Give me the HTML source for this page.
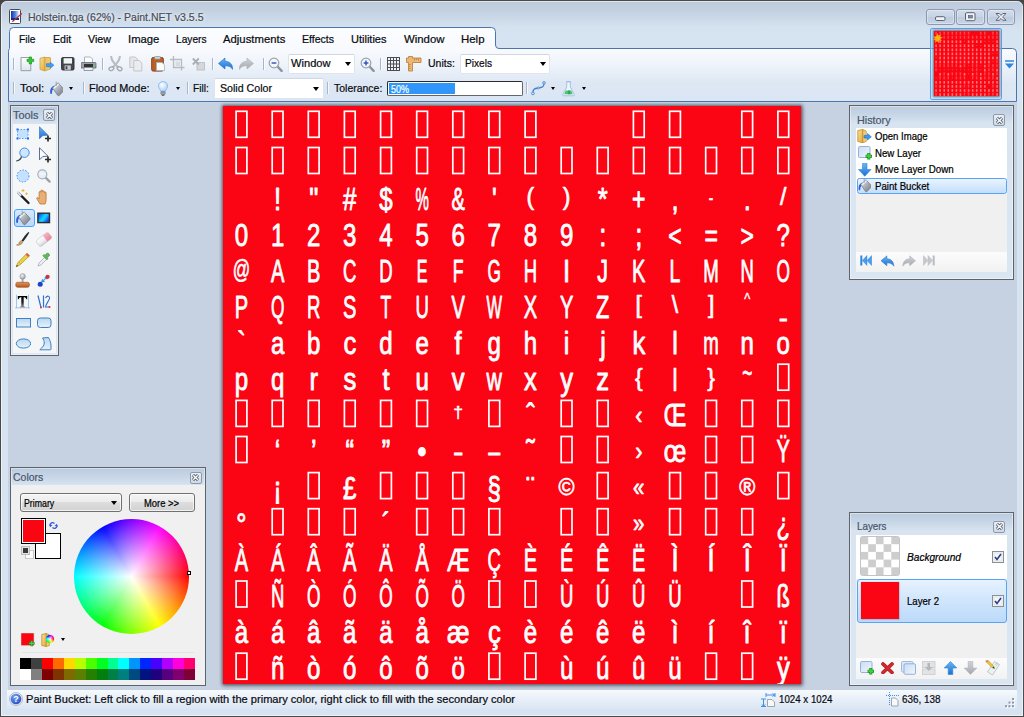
<!DOCTYPE html>
<html lang="en"><head><meta charset="utf-8"><title>Holstein.tga (62%) - Paint.NET v3.5.5</title>
<style>
html,body{margin:0;padding:0}
body{width:1024px;height:717px;overflow:hidden;position:relative;background:#454545;font-family:"Liberation Sans",sans-serif;font-size:12px}
.a,.t,svg{position:absolute}
.t{white-space:nowrap;transform-origin:0 50%;display:block;-webkit-text-stroke:.22px currentColor}
#win{left:0;top:0;width:1022px;height:715px;border:1px solid #4b4b4b;border-radius:7px 7px 1px 1px;
 background:linear-gradient(#bccbdc 0px,#c1cfdf 8px,#cad7e6 16px,#d3e0ed 25px,#d6e3f0 32px,#d7e3f1 100%)}
#win:before{content:"";position:absolute;left:0;top:0;right:0;bottom:0;border:1px solid rgba(255,255,255,.5);border-radius:6px 6px 0 0}
#work{left:7.500px;top:102px;width:1009.300px;height:588px;background:#c6d1e2}
.panel{border:1px solid #5f636a;background:#dbe6f4;box-sizing:border-box}
.cb{border:1px solid #8e9aab;border-radius:2px;box-sizing:border-box;background:linear-gradient(#e9eff7,#cfdae8)}
.sep{width:1px;background:#9fb0c8}
.combo{background:#fff;border:1px solid #dde4ee;border-top-color:#cfd7e2;box-sizing:border-box;border-radius:2px}
.arr{width:0;height:0;border-left:3.5px solid transparent;border-right:3.5px solid transparent;border-top:4px solid #000}
.wb{box-sizing:border-box;border:1px solid #8c99b4;border-radius:3px;background:linear-gradient(#d2ddeb,#c6d3e4 48%,#bdcbdd 52%,#c8d5e5);box-shadow:inset 0 0 0 1px rgba(255,255,255,.32)}
</style></head><body>
<div id="win" class="a"></div>

<svg style="left:9px;top:9px" width="13" height="15" viewBox="0 0 13 15">
<rect x=".5" y=".5" width="11" height="14" rx="1" fill="#fff" stroke="#4a4a4a"/>
<defs><linearGradient id="ig" x1="0" y1="0" x2="1" y2="0"><stop offset="0" stop-color="#1035b5"/><stop offset=".55" stop-color="#5a86e0"/><stop offset="1" stop-color="#f2f6ff"/></linearGradient></defs>
<rect x="2" y="2" width="8" height="9" fill="url(#ig)"/><rect x="2" y="9" width="8" height="2" fill="#102a7a"/>
<path d="M3.5 12.5 L13 4.5" stroke="#b0304a" stroke-width="1.3"/><path d="M2.6 13.2l1.6-.4-.9-.9z" fill="#3a6ad0"/></svg>
<span class="t" style="left:28.00px;top:10.32px;font-size:11.5px;line-height:14px;color:#464e5b;transform:scaleX(0.9162);text-shadow:0 0 6px rgba(255,255,255,.9),0 0 3px rgba(255,255,255,.8);">Holstein.tga (62%) - Paint.NET v3.5.5</span>
<div class="a wb" style="left:926px;top:9px;width:29px;height:16px"></div>
<div class="a wb" style="left:956px;top:9px;width:29px;height:16px"></div>
<div class="a wb" style="left:987px;top:9px;width:28px;height:16px"></div>
<svg style="left:926px;top:9px" width="90" height="16" viewBox="0 0 90 16">
<rect x="9.500" y="7.700" width="9.500" height="3.800" rx="1.300" fill="#eef1f5" stroke="#5a6373" stroke-width="1"/>
<rect x="39.500" y="3.700" width="9.500" height="8" rx="1.200" fill="#eef1f5" stroke="#5a6373" stroke-width="1"/><rect x="42.300" y="6.500" width="4" height="2.500" fill="#7f8ca3" stroke="#4e5868" stroke-width=".6"/>
<path d="M70 4.500h3.200l1.800 1.900 1.800-1.900H80l-3.400 3.400 3.400 3.400h-3.200L75 9.500l-1.800 1.800H70l3.400-3.400z" fill="#eef1f5" stroke="#5a6373" stroke-width="1" stroke-linejoin="round"/>
</svg>
<div id="work" class="a"></div>
<svg style="left:0;top:0" width="1024" height="106" viewBox="0 0 1024 106">
<defs><linearGradient id="mg" x1="0" y1="27" x2="0" y2="101" gradientUnits="userSpaceOnUse">
<stop offset="0" stop-color="#fcfdff"/><stop offset=".3" stop-color="#f8fafe"/><stop offset=".52" stop-color="#eef3fa"/><stop offset=".76" stop-color="#dde7f4"/><stop offset="1" stop-color="#dbe6f4"/></linearGradient></defs>
<path d="M8.5 101.5V51.5q0-2 1-3V31.5q0-4 4-4H491.5q4 0 4 4V45q0 3.500 3.500 3.500H1012.5q4 0 4 4V101.500z" fill="url(#mg)" stroke="#4d74ab" stroke-width="1"/>
<rect x="8" y="102" width="1009" height="1" fill="#cbd5e4"/>
</svg>
<span class="t" style="left:19.40px;top:32.22px;font-size:11.5px;line-height:14px;color:#080b10;transform:scaleX(0.8851);">File</span>
<span class="t" style="left:53.00px;top:32.22px;font-size:11.5px;line-height:14px;color:#080b10;transform:scaleX(0.9184);">Edit</span>
<span class="t" style="left:88.00px;top:32.22px;font-size:11.5px;line-height:14px;color:#080b10;transform:scaleX(0.9305);">View</span>
<span class="t" style="left:128.00px;top:32.22px;font-size:11.5px;line-height:14px;color:#080b10;transform:scaleX(0.9793);">Image</span>
<span class="t" style="left:176.00px;top:32.22px;font-size:11.5px;line-height:14px;color:#080b10;transform:scaleX(0.8836);">Layers</span>
<span class="t" style="left:223.00px;top:32.22px;font-size:11.5px;line-height:14px;color:#080b10;transform:scaleX(0.9845);">Adjustments</span>
<span class="t" style="left:302.00px;top:32.22px;font-size:11.5px;line-height:14px;color:#080b10;transform:scaleX(0.9157);">Effects</span>
<span class="t" style="left:351.00px;top:32.22px;font-size:11.5px;line-height:14px;color:#080b10;transform:scaleX(0.9579);">Utilities</span>
<span class="t" style="left:404.00px;top:32.22px;font-size:11.5px;line-height:14px;color:#080b10;transform:scaleX(0.9902);">Window</span>
<span class="t" style="left:461.00px;top:32.22px;font-size:11.5px;line-height:14px;color:#080b10;transform:scaleX(0.9936);">Help</span>
<div class="a sep" style="left:13px;top:58px;height:12px;background:#a7b6cd;box-shadow:1px 0 0 rgba(255,255,255,.7)"></div>
<div class="a sep" style="left:102px;top:58px;height:12px;background:#a7b6cd;box-shadow:1px 0 0 rgba(255,255,255,.7)"></div>
<div class="a sep" style="left:212px;top:58px;height:12px;background:#a7b6cd;box-shadow:1px 0 0 rgba(255,255,255,.7)"></div>
<div class="a sep" style="left:263px;top:58px;height:12px;background:#a7b6cd;box-shadow:1px 0 0 rgba(255,255,255,.7)"></div>
<div class="a sep" style="left:380px;top:58px;height:12px;background:#a7b6cd;box-shadow:1px 0 0 rgba(255,255,255,.7)"></div>
<div class="a sep" style="left:13px;top:82px;height:12px;background:#a7b6cd;box-shadow:1px 0 0 rgba(255,255,255,.7)"></div>
<div class="a sep" style="left:83px;top:82px;height:12px;background:#a7b6cd;box-shadow:1px 0 0 rgba(255,255,255,.7)"></div>
<div class="a sep" style="left:187px;top:82px;height:12px;background:#a7b6cd;box-shadow:1px 0 0 rgba(255,255,255,.7)"></div>
<div class="a sep" style="left:327px;top:82px;height:12px;background:#a7b6cd;box-shadow:1px 0 0 rgba(255,255,255,.7)"></div>
<div class="a sep" style="left:526px;top:82px;height:12px;background:#a7b6cd;box-shadow:1px 0 0 rgba(255,255,255,.7)"></div>
<span class="t" style="left:428.00px;top:56.32px;font-size:11.5px;line-height:14px;color:#080b10;transform:scaleX(0.9117);">Units:</span>
<span class="t" style="left:20.00px;top:80.92px;font-size:11.5px;line-height:14px;color:#080b10;transform:scaleX(0.9963);">Tool:</span>
<span class="t" style="left:88.80px;top:80.92px;font-size:11.5px;line-height:14px;color:#080b10;transform:scaleX(0.9465);">Flood Mode:</span>
<span class="t" style="left:192.50px;top:80.92px;font-size:11.5px;line-height:14px;color:#080b10;transform:scaleX(0.8835);">Fill:</span>
<span class="t" style="left:333.50px;top:80.92px;font-size:11.5px;line-height:14px;color:#080b10;transform:scaleX(0.9103);">Tolerance:</span>
<div class="a combo" style="left:288px;top:53.500px;width:67px;height:20.500px"></div>
<span class="t" style="left:290.50px;top:56.32px;font-size:11.5px;line-height:14px;color:#080b10;transform:scaleX(0.9658);">Window</span>
<div class="a arr" style="left:344.5px;top:62px"></div>
<div class="a combo" style="left:460px;top:53.500px;width:90px;height:20.500px"></div>
<span class="t" style="left:464.60px;top:56.32px;font-size:11.5px;line-height:14px;color:#080b10;transform:scaleX(0.8802);">Pixels</span>
<div class="a arr" style="left:539.5px;top:62px"></div>
<div class="a combo" style="left:213.500px;top:77.500px;width:110px;height:21px"></div>
<span class="t" style="left:219.70px;top:80.92px;font-size:11.5px;line-height:14px;color:#080b10;transform:scaleX(0.9245);">Solid Color</span>
<div class="a arr" style="left:313px;top:86.5px"></div>
<div class="a arr" style="left:68.9px;top:87px;border-left-width:2.700px;border-right-width:2.700px;border-top-width:3px"></div>
<div class="a arr" style="left:175.7px;top:87px;border-left-width:2.700px;border-right-width:2.700px;border-top-width:3px"></div>
<div class="a arr" style="left:551.2px;top:87px;border-left-width:2.700px;border-right-width:2.700px;border-top-width:3px"></div>
<div class="a arr" style="left:582.3px;top:87px;border-left-width:2.700px;border-right-width:2.700px;border-top-width:3px"></div>
<div class="a" style="left:387px;top:81px;width:136px;height:15px;box-sizing:border-box;border:1px solid #2b2b2b;border-right-color:#666;border-bottom-color:#666;background:#fff;border-radius:2px"><div class="a" style="left:1px;top:1px;width:66px;height:11px;background:#3096fa"></div></div>
<span class="t" style="left:391.00px;top:81.59px;font-size:11px;line-height:14px;color:#fff;transform:scaleX(0.8175);">50%</span>
<svg width="0" height="0" style="left:0;top:0"><defs>
<linearGradient id="gFold" x1="0" y1="0" x2="1" y2="1"><stop offset="0" stop-color="#fbe29a"/><stop offset="1" stop-color="#e0a83c"/></linearGradient>
<linearGradient id="gBlueA" x1="0" y1="0" x2="0" y2="1"><stop offset="0" stop-color="#6db6f5"/><stop offset="1" stop-color="#1a6fd0"/></linearGradient>
<linearGradient id="gGrayA" x1="0" y1="0" x2="0" y2="1"><stop offset="0" stop-color="#d0d3d8"/><stop offset="1" stop-color="#a4a8ae"/></linearGradient>
<linearGradient id="gPage" x1="0" y1="0" x2="0" y2="1"><stop offset="0" stop-color="#ffffff"/><stop offset="1" stop-color="#dfe5ec"/></linearGradient>
<linearGradient id="gLay" x1="0" y1="0" x2="1" y2="1"><stop offset="0" stop-color="#c9dcf4"/><stop offset="1" stop-color="#f1f6fc"/></linearGradient><linearGradient id="gSel" x1="0" y1="0" x2="0" y2="1"><stop offset="0" stop-color="#eaf4ff"/><stop offset="1" stop-color="#b5d6fb"/></linearGradient>
<linearGradient id="gShape" x1="0" y1="0" x2="0" y2="1"><stop offset="0" stop-color="#b8d7f1"/><stop offset="1" stop-color="#e6f1fa"/></linearGradient>
<linearGradient id="gBucket" x1="0" y1="0" x2="1" y2="1"><stop offset="0" stop-color="#eef0f3"/><stop offset=".5" stop-color="#a9aeb6"/><stop offset="1" stop-color="#6f747c"/></linearGradient>
<radialGradient id="gBulb" cx=".4" cy=".35" r=".7"><stop offset="0" stop-color="#ffffff"/><stop offset="1" stop-color="#a8d0fb"/></radialGradient>
<radialGradient id="gHelp" cx=".4" cy=".3" r=".8"><stop offset="0" stop-color="#7aa4f0"/><stop offset="1" stop-color="#1f49c4"/></radialGradient>
<pattern id="chk" x=".5" y=".5" width="15.400" height="15.400" patternUnits="userSpaceOnUse"><rect width="15.400" height="15.400" fill="#fff"/><rect width="7.700" height="7.700" fill="#cdcdcd"/><rect x="7.700" y="7.700" width="7.700" height="7.700" fill="#cdcdcd"/></pattern>
</defs></svg>
<svg style="left:19.5px;top:55.5px" width="15" height="16" viewBox="0 0 15 16"><path d="M1 1.500h9.800v13.200h-9.800z" fill="url(#gPage)" stroke="#8d979f" stroke-width=".9"/><path d="M7 3.300h2.200V1h2.300v2.300h2.200v2.300h-2.200v2.300H9.200V5.600H7z" fill="#35c935" stroke="#17961c" stroke-width=".7" stroke-linejoin="round"/></svg>
<svg style="left:38.5px;top:56px" width="16" height="16" viewBox="0 0 16 16"><path d="M1 2.300l5-1.300v14l-5-1.600z" fill="url(#gFold)" stroke="#cf9f43" stroke-width=".8" stroke-linejoin="round"/><path d="M6 1.500h5q.5 0 .5.500v11l-5.500 1.800z" fill="#efc66c" stroke="#cf9f43" stroke-width=".8" stroke-linejoin="round"/><path d="M7.500 7.700h3.800V6.200l3.600 3-3.600 3v-1.500H7.500z" fill="#3f9ff2" stroke="#2279cf" stroke-width=".6" stroke-linejoin="round"/></svg>
<svg style="left:61px;top:55.5px" width="14" height="16" viewBox="0 0 14 16"><rect x=".6" y="1.600" width="12.400" height="12.400" rx="1.200" fill="#45484d" stroke="#26282b" stroke-width=".9"/><rect x="2.600" y="2.200" width="8.400" height="5.400" fill="#eef5f3"/><rect x="3.600" y="9.400" width="6.200" height="4.400" fill="#c9cdd2"/><rect x="4.600" y="10.300" width="1.800" height="2.800" fill="#3f4247"/></svg>
<svg style="left:81px;top:56px" width="16" height="16" viewBox="0 0 16 16"><path d="M3.500 1h6l2 2v5h-8z" fill="#fff" stroke="#9aa3ad" stroke-width=".8"/><path d="M1 6.500h13q1 0 1 1v4.500h-15v-4.500q0-1 1-1z" fill="#9da2a9" stroke="#62676e" stroke-width=".8"/><rect x="3" y="8" width="9" height="3.200" fill="#2f3236"/><path d="M3 11.500h9v3h-9z" fill="#eef1f4" stroke="#7f868e" stroke-width=".8"/><rect x="12.300" y="8" width="1.200" height="1.200" fill="#46d246"/></svg>
<svg style="left:108px;top:56px" width="15" height="16" viewBox="0 0 15 16"><path d="M3.200 .8c.4 3 2.500 6.500 6.800 10.200M11.800 .8c-.4 3-2.500 6.500-6.800 10.200" stroke="#b9bcc0" stroke-width="2.100" fill="none" stroke-linecap="round"/><ellipse cx="3.400" cy="12.700" rx="2.500" ry="1.800" transform="rotate(-25 3.400 12.700)" fill="none" stroke="#a4a8ad" stroke-width="1.300"/><ellipse cx="11.600" cy="12.700" rx="2.500" ry="1.800" transform="rotate(25 11.600 12.700)" fill="none" stroke="#a4a8ad" stroke-width="1.300"/></svg>
<svg style="left:129px;top:56px" width="14" height="16" viewBox="0 0 14 16"><path d="M.8 1h5.500l2 2v8.500h-7.500z" fill="#e6e7e9" stroke="#c3c5c8"/><path d="M4.800 4.500h5.500l2.500 2.500v8h-8z" fill="#ebecee" stroke="#c3c5c8"/></svg>
<svg style="left:151px;top:56px" width="14" height="16" viewBox="0 0 14 16"><rect x=".7" y="1.500" width="11.600" height="13.600" rx="1.500" fill="#b9602a" stroke="#8a4218"/><rect x="3.500" y=".4" width="6" height="2.800" rx="1" fill="#cfd2d6" stroke="#7f858c" stroke-width=".7"/><path d="M5.500 6.500h5.500l2.500 2.300v5.700h-8z" fill="#fbfcfc" stroke="#a9b0b6" stroke-width=".8"/></svg>
<svg style="left:170px;top:56px" width="15" height="16" viewBox="0 0 15 16"><path d="M3.500 0v11.500h11M0 3.500h11.500v11" stroke="#b7babf" stroke-width="1.300" fill="none"/><rect x="5.500" y="5.500" width="4.500" height="4.500" fill="#d8dadd"/></svg>
<svg style="left:192px;top:57px" width="14" height="15" viewBox="0 0 14 15"><rect x="5" y="5.500" width="7.500" height="7.500" fill="#d5d7da" stroke="#bfc2c6"/><path d="M.8 1.500l6 6M6.800 1.500l-6 6" stroke="#a9adb2" stroke-width="1.800"/></svg>
<svg style="left:218px;top:57px" width="15" height="14" viewBox="0 0 15 14"><path d="M0.500 6.500L7 1v3.300c5 .2 7.500 3 7.800 8.200-1.800-2.800-4-3.800-7.800-3.700V12z" fill="url(#gBlueA)" stroke="#2a78d0" stroke-width=".7" stroke-linejoin="round"/></svg>
<svg style="left:239px;top:57px" width="15" height="14" viewBox="0 0 15 14"><path d="M14.500 6.500L8 1v3.300c-5 .2-7.500 3-7.800 8.200 1.800-2.800 4-3.800 7.800-3.700V12z" fill="url(#gGrayA)" stroke="#b3b6bb" stroke-width=".7" stroke-linejoin="round"/></svg>
<svg style="left:267.5px;top:56.5px" width="15" height="15" viewBox="0 0 15 15"><path d="M9.300 9.300l4.300 4.600" stroke="#8f959c" stroke-width="2.400" stroke-linecap="round"/><circle cx="6" cy="6" r="4.800" fill="#f3f7fb" stroke="#9aa3ad" stroke-width="1.200"/><path d="M3.600 6h4.800" stroke="#2a50c0" stroke-width="1.400"/></svg>
<svg style="left:359.5px;top:56.5px" width="15" height="15" viewBox="0 0 15 15"><path d="M9.300 9.300l4.300 4.600" stroke="#8f959c" stroke-width="2.400" stroke-linecap="round"/><circle cx="6" cy="6" r="4.800" fill="#f3f7fb" stroke="#9aa3ad" stroke-width="1.200"/><path d="M3.600 6h4.800" stroke="#2a50c0" stroke-width="1.400"/><path d="M6 3.600v4.800" stroke="#2a50c0" stroke-width="1.400"/></svg>
<svg style="left:386.5px;top:57px" width="13" height="14" viewBox="0 0 13 14"><rect x=".5" y=".5" width="12" height="13" fill="#f2f3f5" stroke="#4c4f54"/><path d="M3.500 0v14M6.500 0v14M9.500 0v14M0 3.500h13M0 7h13M0 10.500h13" stroke="#4c4f54" stroke-width="1"/></svg>
<svg style="left:406px;top:55.5px" width="16" height="16" viewBox="0 0 16 16"><path d="M.5 2h2v-1.500h4v1.500h8.500v4.500h-8.500v8.500h-4v-8.500h-2z" fill="#ecb674" stroke="#c08440" stroke-width=".9" stroke-linejoin="round"/><path d="M8.500 2.500v2M10.500 2.500v1.500M12.500 2.500v2M3 8.500h1.500M3 10.500h1.200M3 12.500h1.500" stroke="#a66c2c" stroke-width=".6"/></svg>
<svg style="left:48.5px;top:81px" width="14" height="16" viewBox="0 0 14 16"><path d="M5 4.800C2 6 .6 9 1.400 12.800c.8.700 1.700.200 1.600-1C2.900 9.500 3.800 8 6 6.800z" fill="#2a62de"/><path d="M3.600 6.900L9.200 1.900 15 8.300q.4.800-.3 1.400L10.300 14.400q-.9.600-1.700-.1z" fill="url(#gBucket)" stroke="#6a6f78" stroke-width=".7" stroke-linejoin="round"/><path d="M3.900 6.900L9.200 2.200l1.300 1.500L5.200 8.500z" fill="#eef0f4" stroke="#9a9fa8" stroke-width=".4"/><path d="M7.200 5V.6" stroke="#8a8f98" stroke-width=".8"/></svg>
<svg style="left:158px;top:81px" width="10" height="15" viewBox="0 0 10 15"><path d="M5 .6c3 0 4.600 2.100 4.600 4.300 0 2.300-1.800 3.100-2.200 5.400H2.700C2.300 8 .5 7.200.5 4.900.5 2.700 2.100.6 5 .6z" fill="url(#gBulb)" stroke="#7fb2ee" stroke-width=".8"/><rect x="2.900" y="10.600" width="4.300" height="3" rx=".8" fill="#9a9ea5" stroke="#6c7077" stroke-width=".6"/><path d="M3.800 14.300h2.500" stroke="#4e5157" stroke-width="1"/></svg>
<svg style="left:531px;top:81px" width="15" height="15" viewBox="0 0 15 15"><path d="M1.900 12.400C1.600 8 3.500 7.600 7.400 7C11.300 6.400 13.300 6 13 1.900" fill="none" stroke="#3f7fd0" stroke-width="1.300"/><circle cx="1.900" cy="12.400" r="1.400" fill="#cfe0f5" stroke="#3f7fd0" stroke-width=".8"/><circle cx="7.400" cy="7" r="1.100" fill="#cfe0f5" stroke="#3f7fd0" stroke-width=".7"/><circle cx="13" cy="1.900" r="1.300" fill="#cfe0f5" stroke="#3f7fd0" stroke-width=".8"/></svg>
<svg style="left:562px;top:80.5px" width="13" height="16" viewBox="0 0 13 16"><path d="M4.700 .7h3.600v5.300l4 7.600q.4 1.200-.9 1.200H1.600q-1.300 0-.9-1.200l4-7.600z" fill="#edf4fb" stroke="#9dbde2" stroke-width=".9" stroke-linejoin="round"/><path d="M3.700 9.600h5.600l1.500 3.700H2.200z" fill="#4cc474"/><path d="M6.200 9.600h1.800l.5 3.700H5.800z" fill="#2fa85a"/><path d="M4.300 .7h4.400" stroke="#9dbde2" stroke-width="1"/></svg>
<div class="a" style="left:930px;top:28px;width:72px;height:72px;box-sizing:border-box;border:1px solid #58a6f5;border-radius:2px;background:rgba(190,220,252,.55)"></div>
<div class="a" style="left:934px;top:31px;width:65px;height:65px;background:#fa0512;box-shadow:0 0 2px 1px rgba(60,60,60,.7)"></div>
<svg style="left:1005px;top:60px" width="9" height="9" viewBox="0 0 9 9"><rect x="0" y="0" width="9" height="2" fill="#5aa2ea"/><path d="M0 3.500h9l-4.500 5z" fill="#2d86e0"/></svg>
<div class="a panel" style="left:10px;top:105px;width:49px;height:251px;background:linear-gradient(#bacbde 0px,#cbd9e9 11px,#d8e5f1 18px,#dbe6f3 100%);box-shadow:inset 0 0 0 1px rgba(255,255,255,.42)"></div><span class="t" style="left:13.30px;top:108.02px;font-size:11.5px;line-height:14px;color:#48566b;transform:scaleX(0.9499);">Tools</span><div class="a cb" style="left:43px;top:109px;width:12px;height:12px"></div><svg style="left:45.5px;top:111.5px" width="7" height="7" viewBox="0 0 7 7"><path d="M1 1l5 5M6 1l-5 5" stroke="#3d4656" stroke-width="2.900"/><path d="M1.200 1.200l4.600 4.600M5.800 1.200l-4.600 4.600" stroke="#ffffff" stroke-width="1.500"/></svg>
<div class="a" style="left:13px;top:124px;width:43px;height:229px;background:#f5f6f8"></div>
<div class="a" style="left:14px;top:208.500px;width:20.500px;height:18px;box-sizing:border-box;border:1.300px solid #48a2ff;border-radius:3px;background:linear-gradient(#d6e8fc,#bcd9fa)"></div>
<svg style="left:15px;top:125.5px" width="16" height="16" viewBox="0 0 16 16"><rect x="2.500" y="3.500" width="10.500" height="9" fill="#c4e2ff" stroke="#5a9cf0" stroke-width="1" stroke-dasharray="1.500 1.500"/><g fill="#1f6fee"><rect x="1.500" y="2.500" width="2" height="2"/><rect x="12" y="2.500" width="2" height="2"/><rect x="1.500" y="11.500" width="2" height="2"/><rect x="12" y="11.500" width="2" height="2"/></g></svg>
<svg style="left:36.0px;top:125.5px" width="16" height="16" viewBox="0 0 16 16"><path d="M3.500 .8v12l3.300-3.300 5.200-.3z" fill="url(#gBlueA)" stroke="#2a62b8" stroke-width=".6"/><path d="M9 12.500h6M12 9.500v6" stroke="#2b2b2b" stroke-width="1.700"/></svg>
<svg style="left:15px;top:146.5px" width="16" height="16" viewBox="0 0 16 16"><circle cx="9.500" cy="5.700" r="4.700" fill="#cfe6ff" stroke="#3c8cf0" stroke-width="1"/><path d="M6.500 9.300C6 12 4 13.500 1.200 14" fill="none" stroke="#3b3f46" stroke-width="1.200"/></svg>
<svg style="left:36.0px;top:146.5px" width="16" height="16" viewBox="0 0 16 16"><path d="M3.500 .8v12l3.300-3.300 5.200-.3z" fill="#fcfdff" stroke="#4b5e88" stroke-width=".9"/><path d="M9 12.500h6M12 9.500v6" stroke="#2b2b2b" stroke-width="1.700"/></svg>
<svg style="left:15px;top:167.5px" width="16" height="16" viewBox="0 0 16 16"><circle cx="8" cy="8" r="6" fill="#c4e2ff" stroke="#3c8cf0" stroke-width="1" stroke-dasharray="1.500 1.500"/></svg>
<svg style="left:36.0px;top:167.5px" width="16" height="16" viewBox="0 0 16 16"><path d="M9.600 9.600l4 4" stroke="#9ba1a9" stroke-width="2.300" stroke-linecap="round"/><circle cx="6.300" cy="6.300" r="4.500" fill="#e6eef7" stroke="#a9b1bb" stroke-width="1.200"/><path d="M3.500 6h5.500" stroke="#fff" stroke-width=".8" fill="none"/></svg>
<svg style="left:15px;top:188.5px" width="16" height="16" viewBox="0 0 16 16"><path d="M3.500 4l10 10" stroke="#1c1c1c" stroke-width="2.400" stroke-linecap="round"/><path d="M3 3.500l2.500 2.500" stroke="#d9dce0" stroke-width="2.400" stroke-linecap="round"/><path d="M8 0v3M6.500 1.500h3M11.500 3.500v2.400M10.300 4.700h2.400" stroke="#f0b428" stroke-width="1"/></svg>
<svg style="left:36.0px;top:188.5px" width="16" height="16" viewBox="0 0 16 16"><path d="M4 15c-1-2-3-4.300-3.300-6 .5-1 1.700-.3 2.400 1V3.300c0-1.200 1.700-1.200 1.700 0V2c0-1.300 1.800-1.300 1.800 0v.8c0-1.200 1.800-1.200 1.800 0v1c0-1.100 1.700-1.100 1.700 0V11c0 1.700-.5 2.800-1 4z" fill="#e8ae72" stroke="#b9773c" stroke-width=".8" stroke-linejoin="round"/></svg>
<svg style="left:15px;top:209.5px" width="16" height="16" viewBox="0 0 16 16"><path d="M5 4.800C2 6 .6 9 1.400 12.800c.8.700 1.700.200 1.600-1C2.900 9.500 3.800 8 6 6.800z" fill="#2a62de"/><path d="M3.600 6.900L9.200 1.900 15 8.300q.4.800-.3 1.400L10.300 14.400q-.9.600-1.700-.1z" fill="url(#gBucket)" stroke="#6a6f78" stroke-width=".7" stroke-linejoin="round"/><path d="M3.900 6.900L9.200 2.200l1.300 1.500L5.200 8.500z" fill="#eef0f4" stroke="#9a9fa8" stroke-width=".4"/><path d="M7.200 5V.6" stroke="#8a8f98" stroke-width=".8"/></svg>
<svg style="left:36.0px;top:209.5px" width="16" height="16" viewBox="0 0 16 16"><defs><linearGradient id="gGr" x1="0" y1="0" x2="1" y2=".6"><stop offset="0" stop-color="#0028ee"/><stop offset=".5" stop-color="#12c4ff"/><stop offset=".62" stop-color="#1ad4ff"/><stop offset="1" stop-color="#0a4cf0"/></linearGradient></defs><rect x="1.900" y="3.200" width="11.600" height="9.400" fill="url(#gGr)" stroke="#2a2c30" stroke-width="1.400"/></svg>
<svg style="left:15px;top:230.5px" width="16" height="16" viewBox="0 0 16 16"><path d="M13.500 1C11 3 8 7 6.500 9.500l1.500 1.300C10 8.500 13 4.500 14.300 1.600z" fill="#26282c"/><path d="M6.300 9.700c-1.500.3-2.300 1.500-2.500 2.800-.4.800-1.300 1.300-2.300 1.500 2.500.8 5.300-.3 6.300-3z" fill="#c9a46a" stroke="#8c6a36" stroke-width=".5"/></svg>
<svg style="left:36.0px;top:230.5px" width="16" height="16" viewBox="0 0 16 16"><defs><linearGradient id="gEr" x1="0" y1="0" x2="0" y2="1"><stop offset="0" stop-color="#ffffff"/><stop offset=".65" stop-color="#ececef"/><stop offset="1" stop-color="#c9cbd0"/></linearGradient><linearGradient id="gEp" x1="0" y1="0" x2="0" y2="1"><stop offset="0" stop-color="#f7b4c4"/><stop offset="1" stop-color="#e8849e"/></linearGradient></defs><g transform="rotate(-38 8 8.500)"><rect x=".3" y="4.600" width="15.400" height="7.600" rx="2.200" fill="url(#gEr)" stroke="#c2c5ca" stroke-width=".6"/><path d="M9.500 4.600h4q2.200 0 2.200 2.200v3.200q0 2.200-2.200 2.200h-4z" fill="url(#gEp)"/></g></svg>
<svg style="left:15px;top:251.5px" width="16" height="16" viewBox="0 0 16 16"><path d="M12 1.200l2.600 2.600-9.800 9.200-3.600 1.800 1.400-3.800z" fill="#ecd23e" stroke="#a8901c" stroke-width=".7" stroke-linejoin="round"/><path d="M11.200 2.800l1.800 1.800M4 10l1.600 1.600" stroke="#b89c20" stroke-width=".5"/><path d="M12 1.200l2.600 2.600-1.300 1.200-2.600-2.600z" fill="#e8525c"/><path d="M1.200 14.800l.7-1.900 1.200 1.200z" fill="#2a2a2a"/></svg>
<svg style="left:36.0px;top:251.5px" width="16" height="16" viewBox="0 0 16 16"><path d="M2 14l1-3 6-6 2 2-6 6z" fill="#eceff2" stroke="#a9afb7" stroke-width=".8"/><path d="M9 3.500l1.500-2q1.200-.8 2.300.2t.3 2.300l-2 1.500 1 1-1.200 1.200-4-4L8 2.500z" fill="#5fb95f" stroke="#3d8a3d" stroke-width=".6"/></svg>
<svg style="left:15px;top:272.5px" width="16" height="16" viewBox="0 0 16 16"><defs><radialGradient id="gKn" cx=".4" cy=".35" r=".7"><stop offset="0" stop-color="#f4f5f6"/><stop offset="1" stop-color="#8e9299"/></radialGradient><linearGradient id="gBs" x1="0" y1="0" x2="0" y2="1"><stop offset="0" stop-color="#e0935a"/><stop offset="1" stop-color="#b4561e"/></linearGradient></defs><path d="M6.800 5h1.600l.3 5h-2.200z" fill="#a9adb3"/><circle cx="7.600" cy="3.400" r="2.800" fill="url(#gKn)" stroke="#8a8e95" stroke-width=".4"/><rect x=".8" y="9.300" width="13.600" height="5" rx="1.800" fill="url(#gBs)" stroke="#9a4a1c" stroke-width=".6"/></svg>
<svg style="left:36.0px;top:272.5px" width="16" height="16" viewBox="0 0 16 16"><path d="M5.300 9.200l1-3 1 1 2.200-2.200-.8-.8 3-.9-1 3-.8-.8-2.200 2.200 1 1z" fill="#2aa0f0" stroke="#1f7fd8" stroke-width=".4"/><circle cx="11.600" cy="3.800" r="2.100" fill="#d82c36"/><circle cx="4.200" cy="11.200" r="2.500" fill="#1c44c8"/></svg>
<svg style="left:15px;top:293.5px" width="16" height="16" viewBox="0 0 16 16"><defs><linearGradient id="gT" x1="0" y1="0" x2="0" y2="1"><stop offset="0" stop-color="#000"/><stop offset=".55" stop-color="#222"/><stop offset="1" stop-color="#9a9a9a"/></linearGradient></defs><path d="M1.500 .8v13.500M13.500 .8v13.500M0 13.800h15" stroke="#8fb8ee" stroke-width=".8" fill="none"/><path d="M2.800 2h9.400v3.200h-.9q-.3-1.900-2-1.900h-.6v8.400q0 1 1.500 1v.8h-5.400v-.8q1.500 0 1.500-1V3.300h-.6q-1.700 0-2 1.900h-.9z" fill="url(#gT)"/></svg>
<svg style="left:36.0px;top:293.5px" width="16" height="16" viewBox="0 0 16 16"><path d="M2 1.500l3 12M7.500 1.500v12" stroke="#2f6fd8" stroke-width="1.200"/><path d="M9.500 4c1.800-3 4.500-2 4 .5-.3 2-3.500 5-4 8.500h4.500" fill="none" stroke="#2f6fd8" stroke-width="1.100"/><circle cx="5" cy="13.500" r="1" fill="#e8303a"/><circle cx="13.500" cy="13" r="1" fill="#e8303a"/></svg>
<svg style="left:15px;top:314.5px" width="16" height="16" viewBox="0 0 16 16"><rect x="1.500" y="3.500" width="14" height="8.500" fill="url(#gShape)" stroke="#3f7fc4" stroke-width="1"/></svg>
<svg style="left:36.0px;top:314.5px" width="16" height="16" viewBox="0 0 16 16"><rect x="1.500" y="3" width="13.500" height="9.500" rx="2.800" fill="url(#gShape)" stroke="#3f7fc4" stroke-width="1"/></svg>
<svg style="left:15px;top:335.5px" width="16" height="16" viewBox="0 0 16 16"><ellipse cx="8.500" cy="7.500" rx="7.200" ry="4.600" fill="url(#gShape)" stroke="#3f7fc4" stroke-width="1"/></svg>
<svg style="left:36.0px;top:335.5px" width="16" height="16" viewBox="0 0 16 16"><path d="M6.500 2L12.500 1.500C14 4 15 7 15 10v3.200q0 .6-.6.600H3.800C6.500 11.500 8.300 9 8.300 7c0-2-.8-3.500-1.800-5z" fill="url(#gShape)" stroke="#3f7fc4" stroke-width="1" stroke-linejoin="round"/></svg>
<div class="a panel" style="left:10px;top:467px;width:196px;height:219px;background:linear-gradient(#bacbde 0px,#cbd9e9 11px,#d8e5f1 18px,#dbe6f3 100%);box-shadow:inset 0 0 0 1px rgba(255,255,255,.42)"></div><span class="t" style="left:13.30px;top:469.82px;font-size:11.5px;line-height:14px;color:#48566b;transform:scaleX(0.9118);">Colors</span><div class="a cb" style="left:189.5px;top:471.5px;width:12px;height:12px"></div><svg style="left:192.0px;top:474.0px" width="7" height="7" viewBox="0 0 7 7"><path d="M1 1l5 5M6 1l-5 5" stroke="#3d4656" stroke-width="2.900"/><path d="M1.200 1.200l4.600 4.600M5.800 1.200l-4.600 4.600" stroke="#ffffff" stroke-width="1.500"/></svg>
<div class="a" style="left:12px;top:485px;width:192px;height:199px;background:#f0f0f0"></div>
<div class="a" style="left:20px;top:493px;width:102px;height:19px;box-sizing:border-box;border:1px solid #707070;border-radius:3px;background:linear-gradient(#f4f4f4,#ececec 45%,#dddddd 50%,#d2d2d2);box-shadow:inset 0 0 0 1px rgba(255,255,255,.7)"></div>
<span class="t" style="left:23.80px;top:495.59px;font-size:11px;line-height:14px;color:#000;transform:scaleX(0.7971);">Primary</span>
<div class="a arr" style="left:110.500px;top:501px"></div>
<div class="a" style="left:128.500px;top:493px;width:66.300px;height:19px;box-sizing:border-box;border:1px solid #707070;border-radius:3px;background:linear-gradient(#f4f4f4,#ececec 45%,#dddddd 50%,#d2d2d2);box-shadow:inset 0 0 0 1px rgba(255,255,255,.7)"></div>
<span class="t" style="left:144.30px;top:495.59px;font-size:11px;line-height:14px;color:#000;transform:scaleX(0.8544);">More &gt;&gt;</span>
<div class="a" style="left:34.500px;top:533px;width:26px;height:26px;box-sizing:border-box;border:1px solid #000;background:#fff"></div>
<div class="a" style="left:20.500px;top:518px;width:25px;height:26px;box-sizing:border-box;border:1px solid #000;background:#fa0512;box-shadow:inset 0 0 0 1px #fff"></div>
<svg style="left:48.5px;top:521px" width="9" height="9" viewBox="0 0 9 9"><path d="M1 4.500C1 2 3.500 .8 5.500 2.500" fill="none" stroke="#2f5fe0" stroke-width="1.300"/><path d="M0 3.500l1.200 2.800L3.500 4z" fill="#2f5fe0"/><path d="M8 4.500C8 7 5.500 8.200 3.500 6.500" fill="none" stroke="#2f5fe0" stroke-width="1.300"/><path d="M9 5.500L7.800 2.700 5.500 5z" fill="#2f5fe0"/></svg>
<svg style="left:20.5px;top:545.5px" width="13" height="13" viewBox="0 0 13 13"><rect x="4.500" y="4.500" width="8" height="8" fill="#fdfdfd" stroke="#c9c9c9"/><rect x=".5" y=".5" width="8" height="8" fill="#e4e4e4" stroke="#bdbdbd"/><rect x="2" y="2" width="5" height="5" fill="#3a3a3a"/></svg>
<div class="a" style="left:74px;top:519px;width:115px;height:115px;border-radius:50%;background:radial-gradient(circle closest-side,#fff 0%,rgba(255,255,255,0) 100%),conic-gradient(from 90deg,#f00,#ff0,#0f0,#0ff,#00f,#f0f,#f00)"></div>
<div class="a" style="left:186.500px;top:571px;width:4px;height:4px;box-sizing:border-box;border:1px solid #000;background:#fff"></div>
<svg style="left:20.5px;top:633px" width="15" height="14" viewBox="0 0 15 14"><rect x="0" y="0" width="13" height="12.500" fill="#fa0512" stroke="#c8c8c8" stroke-width=".6"/><path d="M7.800 10.400h5.800M10.700 7.500v5.800" stroke="#1c8f1c" stroke-width="2.400"/><path d="M8.300 10.400h4.800M10.700 8v4.800" stroke="#48d048" stroke-width="1.200"/></svg>
<svg style="left:41px;top:633px" width="14" height="14" viewBox="0 0 14 14"><path d="M.8 1.500l4.500-1v13l-4.500-1z" fill="url(#gFold)" stroke="#c08a25" stroke-width=".8"/><path d="M5.300 .5v13l3-1v-11z" fill="#f3cd74" stroke="#c08a25" stroke-width=".7"/></svg>
<div class="a" style="left:46px;top:635px;width:8px;height:8px;border-radius:50%;background:radial-gradient(circle closest-side,#fff 0%,rgba(255,255,255,0) 90%),conic-gradient(from 90deg,#f00,#ff0,#0f0,#0ff,#00f,#f0f,#f00)"></div>
<div class="a arr" style="left:60.700px;top:638.300px;border-left-width:2.600px;border-right-width:2.600px;border-top-width:3px"></div>
<div class="a" style="left:22px;top:652px;width:172px;height:1px;background:#dfe4ea"></div>
<div class="a pal" style="left:20.0px;top:658px;width:175.0px;height:21.500px"><i style="left:0.00px;top:0;background:#000000"></i><i style="left:0.00px;top:11px;background:#ffffff"></i><i style="left:10.94px;top:0;background:#404040"></i><i style="left:10.94px;top:11px;background:#808080"></i><i style="left:21.88px;top:0;background:#ff0000"></i><i style="left:21.88px;top:11px;background:#7f0000"></i><i style="left:32.82px;top:0;background:#ff6a00"></i><i style="left:32.82px;top:11px;background:#7f3300"></i><i style="left:43.76px;top:0;background:#ffd800"></i><i style="left:43.76px;top:11px;background:#7f6a00"></i><i style="left:54.70px;top:0;background:#b6ff00"></i><i style="left:54.70px;top:11px;background:#5b7f00"></i><i style="left:65.64px;top:0;background:#4cff00"></i><i style="left:65.64px;top:11px;background:#267f00"></i><i style="left:76.58px;top:0;background:#00ff21"></i><i style="left:76.58px;top:11px;background:#007f0e"></i><i style="left:87.52px;top:0;background:#00ff90"></i><i style="left:87.52px;top:11px;background:#007f46"></i><i style="left:98.46px;top:0;background:#00ffff"></i><i style="left:98.46px;top:11px;background:#007f7f"></i><i style="left:109.40px;top:0;background:#0094ff"></i><i style="left:109.40px;top:11px;background:#004a7f"></i><i style="left:120.34px;top:0;background:#0026ff"></i><i style="left:120.34px;top:11px;background:#00137f"></i><i style="left:131.28px;top:0;background:#4800ff"></i><i style="left:131.28px;top:11px;background:#21007f"></i><i style="left:142.22px;top:0;background:#b200ff"></i><i style="left:142.22px;top:11px;background:#57007f"></i><i style="left:153.16px;top:0;background:#ff00dc"></i><i style="left:153.16px;top:11px;background:#7f006e"></i><i style="left:164.10px;top:0;background:#ff006e"></i><i style="left:164.10px;top:11px;background:#7f0037"></i></div>
<style>.pal i{position:absolute;width:11.24px;height:11px}</style>
<div class="a" style="left:222.5px;top:106.3px;width:578px;height:578px;background:#fb0414;box-shadow:0 0 3px 1px rgba(40,40,50,.6),1px 1px 4px 1px rgba(40,40,50,.35)"></div>
<svg style="left:222.5px;top:106.3px" width="578" height="578" viewBox="0 0 578 578"><g fill="none" stroke="#fff" stroke-width="1.700"><rect x="13.1" y="5.3" width="10.800" height="26"/><rect x="49.2" y="5.3" width="10.800" height="26"/><rect x="85.3" y="5.3" width="10.800" height="26"/><rect x="121.4" y="5.3" width="10.800" height="26"/><rect x="157.6" y="5.3" width="10.800" height="26"/><rect x="193.7" y="5.3" width="10.800" height="26"/><rect x="229.8" y="5.3" width="10.800" height="26"/><rect x="265.9" y="5.3" width="10.800" height="26"/><rect x="302.1" y="5.3" width="10.800" height="26"/><rect x="410.4" y="5.3" width="10.800" height="26"/><rect x="446.6" y="5.3" width="10.800" height="26"/><rect x="518.8" y="5.3" width="10.800" height="26"/><rect x="554.9" y="5.3" width="10.800" height="26"/><rect x="13.1" y="41.5" width="10.800" height="26"/><rect x="49.2" y="41.5" width="10.800" height="26"/><rect x="85.3" y="41.5" width="10.800" height="26"/><rect x="121.4" y="41.5" width="10.800" height="26"/><rect x="157.6" y="41.5" width="10.800" height="26"/><rect x="193.7" y="41.5" width="10.800" height="26"/><rect x="229.8" y="41.5" width="10.800" height="26"/><rect x="265.9" y="41.5" width="10.800" height="26"/><rect x="302.1" y="41.5" width="10.800" height="26"/><rect x="338.2" y="41.5" width="10.800" height="26"/><rect x="374.3" y="41.5" width="10.800" height="26"/><rect x="410.4" y="41.5" width="10.800" height="26"/><rect x="446.6" y="41.5" width="10.800" height="26"/><rect x="482.7" y="41.5" width="10.800" height="26"/><rect x="518.8" y="41.5" width="10.800" height="26"/><rect x="554.9" y="41.5" width="10.800" height="26"/><rect x="554.9" y="258.2" width="10.800" height="26"/><rect x="13.1" y="294.4" width="10.800" height="26"/><rect x="49.2" y="294.4" width="10.800" height="26"/><rect x="85.3" y="294.4" width="10.800" height="26"/><rect x="121.4" y="294.4" width="10.800" height="26"/><rect x="157.6" y="294.4" width="10.800" height="26"/><rect x="193.7" y="294.4" width="10.800" height="26"/><rect x="265.9" y="294.4" width="10.800" height="26"/><rect x="338.2" y="294.4" width="10.800" height="26"/><rect x="374.3" y="294.4" width="10.800" height="26"/><rect x="482.7" y="294.4" width="10.800" height="26"/><rect x="518.8" y="294.4" width="10.800" height="26"/><rect x="554.9" y="294.4" width="10.800" height="26"/><rect x="13.1" y="330.5" width="10.800" height="26"/><rect x="338.2" y="330.5" width="10.800" height="26"/><rect x="374.3" y="330.5" width="10.800" height="26"/><rect x="482.7" y="330.5" width="10.800" height="26"/><rect x="518.8" y="330.5" width="10.800" height="26"/><rect x="85.3" y="366.6" width="10.800" height="26"/><rect x="157.6" y="366.6" width="10.800" height="26"/><rect x="193.7" y="366.6" width="10.800" height="26"/><rect x="229.8" y="366.6" width="10.800" height="26"/><rect x="374.3" y="366.6" width="10.800" height="26"/><rect x="446.6" y="366.6" width="10.800" height="26"/><rect x="482.7" y="366.6" width="10.800" height="26"/><rect x="554.9" y="366.6" width="10.800" height="26"/><rect x="49.2" y="402.7" width="10.800" height="26"/><rect x="85.3" y="402.7" width="10.800" height="26"/><rect x="121.4" y="402.7" width="10.800" height="26"/><rect x="193.7" y="402.7" width="10.800" height="26"/><rect x="229.8" y="402.7" width="10.800" height="26"/><rect x="265.9" y="402.7" width="10.800" height="26"/><rect x="338.2" y="402.7" width="10.800" height="26"/><rect x="374.3" y="402.7" width="10.800" height="26"/><rect x="446.6" y="402.7" width="10.800" height="26"/><rect x="482.7" y="402.7" width="10.800" height="26"/><rect x="518.8" y="402.7" width="10.800" height="26"/><rect x="13.1" y="475.0" width="10.800" height="26"/><rect x="265.9" y="475.0" width="10.800" height="26"/><rect x="302.1" y="475.0" width="10.800" height="26"/><rect x="518.8" y="475.0" width="10.800" height="26"/><rect x="13.1" y="547.2" width="10.800" height="26"/><rect x="265.9" y="547.2" width="10.800" height="26"/><rect x="302.1" y="547.2" width="10.800" height="26"/><rect x="482.7" y="547.2" width="10.800" height="26"/><rect x="518.8" y="547.2" width="10.800" height="26"/></g><g fill="#fff" stroke="#fff" stroke-width=".9" stroke-linejoin="round" font-family="Liberation Sans, sans-serif" font-size="32"><text transform="translate(51.0,103.5) scale(0.800,1.00)">!</text><text transform="translate(86.2,103.5) scale(0.800,1.00)">&quot;</text><text transform="translate(120.1,103.5) scale(0.752,1.00)">#</text><text transform="translate(156.3,103.5) scale(0.752,1.00)">$</text><text transform="translate(192.4,103.5) scale(0.471,1.00)">%</text><text transform="translate(228.5,103.5) scale(0.627,1.00)">&amp;</text><text transform="translate(268.9,103.5) scale(0.780,1.00)">&#x27;</text><text transform="translate(303.6,99.0) scale(0.720,0.74)">(</text><text transform="translate(339.7,99.0) scale(0.720,0.74)">)</text><text transform="translate(374.7,103.5) scale(0.800,1.00)">*</text><text transform="translate(409.1,103.5) scale(0.717,1.00)">+</text><text transform="translate(448.4,103.5) scale(0.800,1.00)">,</text><text transform="translate(485.8,98.5) scale(0.421,0.70)">-</text><text transform="translate(520.7,103.5) scale(0.800,1.00)">.</text><text transform="translate(557.1,99.0) scale(0.720,0.74)">/</text><text transform="translate(11.8,139.7) scale(0.752,1.00)">0</text><text transform="translate(47.9,139.7) scale(0.752,1.00)">1</text><text transform="translate(84.0,139.7) scale(0.752,1.00)">2</text><text transform="translate(120.1,139.7) scale(0.752,1.00)">3</text><text transform="translate(156.3,139.7) scale(0.752,1.00)">4</text><text transform="translate(192.4,139.7) scale(0.752,1.00)">5</text><text transform="translate(228.5,139.7) scale(0.752,1.00)">6</text><text transform="translate(264.6,139.7) scale(0.752,1.00)">7</text><text transform="translate(300.8,139.7) scale(0.752,1.00)">8</text><text transform="translate(336.9,139.7) scale(0.752,1.00)">9</text><text transform="translate(376.2,139.7) scale(0.800,1.00)">:</text><text transform="translate(412.3,139.7) scale(0.800,1.00)">;</text><text transform="translate(445.3,139.7) scale(0.717,0.90)">&lt;</text><text transform="translate(481.4,139.7) scale(0.717,0.90)">=</text><text transform="translate(517.5,139.7) scale(0.717,0.90)">&gt;</text><text transform="translate(553.6,139.7) scale(0.752,1.00)">?</text><text transform="translate(9.7,172.3) scale(0.538,0.80)">@</text><text transform="translate(47.9,175.8) scale(0.627,1.00)">A</text><text transform="translate(84.0,175.8) scale(0.627,1.00)">B</text><text transform="translate(120.1,175.8) scale(0.579,1.00)">C</text><text transform="translate(156.3,175.8) scale(0.579,1.00)">D</text><text transform="translate(193.7,175.8) scale(0.505,1.00)">E</text><text transform="translate(229.8,175.8) scale(0.552,1.00)">F</text><text transform="translate(264.6,175.8) scale(0.539,1.00)">G</text><text transform="translate(300.8,175.8) scale(0.579,1.00)">H</text><text transform="translate(340.0,175.8) scale(0.800,1.00)">I</text><text transform="translate(374.3,175.8) scale(0.675,1.00)">J</text><text transform="translate(409.1,175.8) scale(0.627,1.00)">K</text><text transform="translate(446.6,175.8) scale(0.606,1.00)">L</text><text transform="translate(480.3,175.8) scale(0.581,1.00)">M</text><text transform="translate(517.5,175.8) scale(0.579,1.00)">N</text><text transform="translate(553.6,175.8) scale(0.539,1.00)">O</text><text transform="translate(11.8,211.9) scale(0.627,1.00)">P</text><text transform="translate(47.9,211.9) scale(0.539,1.00)">Q</text><text transform="translate(84.0,211.9) scale(0.579,1.00)">R</text><text transform="translate(120.1,211.9) scale(0.627,1.00)">S</text><text transform="translate(157.6,211.9) scale(0.552,1.00)">T</text><text transform="translate(192.4,211.9) scale(0.579,1.00)">U</text><text transform="translate(228.5,211.9) scale(0.627,1.00)">V</text><text transform="translate(263.6,211.9) scale(0.513,1.00)">W</text><text transform="translate(300.8,211.9) scale(0.627,1.00)">X</text><text transform="translate(336.9,211.9) scale(0.627,1.00)">Y</text><text transform="translate(373.0,211.9) scale(0.685,1.00)">Z</text><text transform="translate(412.6,207.3) scale(0.720,0.74)">[</text><text transform="translate(448.7,207.3) scale(0.720,0.74)">\</text><text transform="translate(484.9,207.3) scale(0.720,0.74)">]</text><text transform="translate(521.2,199.4) scale(0.400,0.50)">^</text><text transform="translate(557.0,209.4) scale(0.375,1.00)">_</text><text transform="translate(14.2,248.1) scale(0.800,1.00)">`</text><text transform="translate(47.9,248.1) scale(0.752,1.00)">a</text><text transform="translate(84.0,248.1) scale(0.752,1.00)">b</text><text transform="translate(120.4,248.1) scale(0.800,1.00)">c</text><text transform="translate(156.3,248.1) scale(0.752,1.00)">d</text><text transform="translate(192.4,248.1) scale(0.752,1.00)">e</text><text transform="translate(231.6,248.1) scale(0.800,1.00)">f</text><text transform="translate(264.6,248.1) scale(0.752,1.00)">g</text><text transform="translate(300.8,248.1) scale(0.752,1.00)">h</text><text transform="translate(340.8,248.1) scale(0.780,1.00)">i</text><text transform="translate(377.3,248.1) scale(0.780,1.00)">j</text><text transform="translate(409.4,248.1) scale(0.800,1.00)">k</text><text transform="translate(449.2,248.1) scale(0.780,1.00)">l</text><text transform="translate(480.3,248.1) scale(0.581,1.00)">m</text><text transform="translate(517.5,248.1) scale(0.752,1.00)">n</text><text transform="translate(553.6,248.1) scale(0.752,1.00)">o</text><text transform="translate(11.8,284.2) scale(0.752,1.00)">p</text><text transform="translate(47.9,284.2) scale(0.752,1.00)">q</text><text transform="translate(86.4,284.2) scale(0.800,1.00)">r</text><text transform="translate(120.4,284.2) scale(0.800,1.00)">s</text><text transform="translate(159.4,284.2) scale(0.800,1.00)">t</text><text transform="translate(192.4,284.2) scale(0.752,1.00)">u</text><text transform="translate(228.8,284.2) scale(0.800,1.00)">v</text><text transform="translate(263.6,284.2) scale(0.667,1.00)">w</text><text transform="translate(301.1,284.2) scale(0.800,1.00)">x</text><text transform="translate(337.2,284.2) scale(0.800,1.00)">y</text><text transform="translate(373.3,284.2) scale(0.800,1.00)">z</text><text transform="translate(412.0,279.6) scale(0.720,0.74)">{</text><text transform="translate(449.0,279.6) scale(0.720,0.74)">|</text><text transform="translate(484.2,279.6) scale(0.720,0.74)">}</text><text transform="translate(519.2,277.2) scale(0.538,0.90)">~</text><text transform="translate(230.3,311.8) scale(0.550,0.52)">†</text><text transform="translate(303.2,320.3) scale(0.800,1.00)">ˆ</text><text transform="translate(412.2,317.8) scale(0.680,0.80)">‹</text><text transform="translate(440.7,320.3) scale(0.703,1.00)">Œ</text><text transform="translate(51.8,356.4) scale(0.780,1.00)">‘</text><text transform="translate(87.9,356.4) scale(0.780,1.00)">’</text><text transform="translate(122.6,356.4) scale(0.800,1.00)">“</text><text transform="translate(158.7,356.4) scale(0.800,1.00)">”</text><text transform="translate(194.6,356.4) scale(0.800,1.00)">•</text><text transform="translate(231.2,356.4) scale(0.449,1.00)">–</text><text transform="translate(265.3,356.4) scale(0.375,1.00)">—</text><text transform="translate(303.3,356.4) scale(0.800,1.00)">˜</text><text transform="translate(412.2,353.9) scale(0.680,0.80)">›</text><text transform="translate(440.7,356.4) scale(0.745,1.00)">œ</text><text transform="translate(553.6,356.4) scale(0.627,1.00)">Ÿ</text><text transform="translate(50.3,392.6) scale(0.800,1.00)">¡</text><text transform="translate(120.1,392.6) scale(0.752,1.00)">£</text><text transform="translate(264.6,392.6) scale(0.752,1.00)">§</text><text transform="translate(303.2,392.6) scale(0.800,1.00)">¨</text><text transform="translate(335.6,388.6) scale(0.679,0.72)">©</text><text transform="translate(410.1,390.1) scale(0.639,0.80)">«</text><text transform="translate(516.2,388.6) scale(0.679,0.72)">®</text><text transform="translate(13.3,428.7) scale(0.800,1.00)">°</text><text transform="translate(158.7,428.7) scale(0.800,1.00)">´</text><text transform="translate(410.1,426.2) scale(0.639,0.80)">»</text><text transform="translate(553.6,428.7) scale(0.685,1.00)">¿</text><text transform="translate(11.8,464.8) scale(0.627,1.00)">À</text><text transform="translate(47.9,464.8) scale(0.627,1.00)">Á</text><text transform="translate(84.0,464.8) scale(0.627,1.00)">Â</text><text transform="translate(120.1,464.8) scale(0.627,1.00)">Ã</text><text transform="translate(156.3,464.8) scale(0.627,1.00)">Ä</text><text transform="translate(192.4,464.8) scale(0.627,1.00)">Å</text><text transform="translate(224.0,464.8) scale(0.703,1.00)">Æ</text><text transform="translate(264.6,464.8) scale(0.579,1.00)">Ç</text><text transform="translate(300.8,464.8) scale(0.627,1.00)">È</text><text transform="translate(336.9,464.8) scale(0.627,1.00)">É</text><text transform="translate(373.0,464.8) scale(0.627,1.00)">Ê</text><text transform="translate(409.1,464.8) scale(0.627,1.00)">Ë</text><text transform="translate(448.4,464.8) scale(0.800,1.00)">Ì</text><text transform="translate(484.5,464.8) scale(0.800,1.00)">Í</text><text transform="translate(520.7,464.8) scale(0.800,1.00)">Î</text><text transform="translate(556.8,464.8) scale(0.800,1.00)">Ï</text><text transform="translate(47.9,500.9) scale(0.579,1.00)">Ñ</text><text transform="translate(84.0,500.9) scale(0.539,1.00)">Ò</text><text transform="translate(120.1,500.9) scale(0.539,1.00)">Ó</text><text transform="translate(156.3,500.9) scale(0.539,1.00)">Ô</text><text transform="translate(192.4,500.9) scale(0.539,1.00)">Õ</text><text transform="translate(228.5,500.9) scale(0.539,1.00)">Ö</text><text transform="translate(336.9,500.9) scale(0.579,1.00)">Ù</text><text transform="translate(373.0,500.9) scale(0.579,1.00)">Ú</text><text transform="translate(409.1,500.9) scale(0.579,1.00)">Û</text><text transform="translate(445.3,500.9) scale(0.579,1.00)">Ü</text><text transform="translate(553.6,500.9) scale(0.685,1.00)">ß</text><text transform="translate(11.8,537.0) scale(0.752,1.00)">à</text><text transform="translate(47.9,537.0) scale(0.752,1.00)">á</text><text transform="translate(84.0,537.0) scale(0.752,1.00)">â</text><text transform="translate(120.1,537.0) scale(0.752,1.00)">ã</text><text transform="translate(156.3,537.0) scale(0.752,1.00)">ä</text><text transform="translate(192.4,537.0) scale(0.752,1.00)">å</text><text transform="translate(224.0,537.0) scale(0.791,1.00)">æ</text><text transform="translate(264.9,537.0) scale(0.800,1.00)">ç</text><text transform="translate(300.8,537.0) scale(0.752,1.00)">è</text><text transform="translate(336.9,537.0) scale(0.752,1.00)">é</text><text transform="translate(373.0,537.0) scale(0.752,1.00)">ê</text><text transform="translate(409.1,537.0) scale(0.752,1.00)">ë</text><text transform="translate(448.4,537.0) scale(0.800,1.00)">ì</text><text transform="translate(484.5,537.0) scale(0.800,1.00)">í</text><text transform="translate(520.6,537.0) scale(0.800,1.00)">î</text><text transform="translate(556.8,537.0) scale(0.800,1.00)">ï</text><text transform="translate(47.9,573.2) scale(0.752,1.00)">ñ</text><text transform="translate(84.0,573.2) scale(0.752,1.00)">ò</text><text transform="translate(120.1,573.2) scale(0.752,1.00)">ó</text><text transform="translate(156.3,573.2) scale(0.752,1.00)">ô</text><text transform="translate(192.4,573.2) scale(0.752,1.00)">õ</text><text transform="translate(228.5,573.2) scale(0.752,1.00)">ö</text><text transform="translate(336.9,573.2) scale(0.752,1.00)">ù</text><text transform="translate(373.0,573.2) scale(0.752,1.00)">ú</text><text transform="translate(409.1,573.2) scale(0.752,1.00)">û</text><text transform="translate(445.3,573.2) scale(0.752,1.00)">ü</text><text transform="translate(553.9,573.2) scale(0.800,1.00)">ÿ</text></g></svg>
<svg style="left:934px;top:31px" width="65" height="65" viewBox="0 0 65 65"><rect x="1.30" y="0.70" width="1.500" height="3" fill="#fff" opacity=".26"/><rect x="5.36" y="0.70" width="1.500" height="3" fill="#fff" opacity=".26"/><rect x="9.43" y="0.70" width="1.500" height="3" fill="#fff" opacity=".26"/><rect x="13.49" y="0.70" width="1.500" height="3" fill="#fff" opacity=".26"/><rect x="17.55" y="0.70" width="1.500" height="3" fill="#fff" opacity=".26"/><rect x="21.61" y="0.70" width="1.500" height="3" fill="#fff" opacity=".26"/><rect x="25.68" y="0.70" width="1.500" height="3" fill="#fff" opacity=".26"/><rect x="29.74" y="0.70" width="1.500" height="3" fill="#fff" opacity=".26"/><rect x="33.80" y="0.70" width="1.500" height="3" fill="#fff" opacity=".26"/><rect x="45.99" y="0.70" width="1.500" height="3" fill="#fff" opacity=".26"/><rect x="50.05" y="0.70" width="1.500" height="3" fill="#fff" opacity=".26"/><rect x="58.17" y="0.70" width="1.500" height="3" fill="#fff" opacity=".26"/><rect x="62.24" y="0.70" width="1.500" height="3" fill="#fff" opacity=".26"/><rect x="1.30" y="4.76" width="1.500" height="3" fill="#fff" opacity=".26"/><rect x="5.36" y="4.76" width="1.500" height="3" fill="#fff" opacity=".26"/><rect x="9.43" y="4.76" width="1.500" height="3" fill="#fff" opacity=".26"/><rect x="13.49" y="4.76" width="1.500" height="3" fill="#fff" opacity=".26"/><rect x="17.55" y="4.76" width="1.500" height="3" fill="#fff" opacity=".26"/><rect x="21.61" y="4.76" width="1.500" height="3" fill="#fff" opacity=".26"/><rect x="25.68" y="4.76" width="1.500" height="3" fill="#fff" opacity=".26"/><rect x="29.74" y="4.76" width="1.500" height="3" fill="#fff" opacity=".26"/><rect x="33.80" y="4.76" width="1.500" height="3" fill="#fff" opacity=".26"/><rect x="37.86" y="4.76" width="1.500" height="3" fill="#fff" opacity=".26"/><rect x="41.92" y="4.76" width="1.500" height="3" fill="#fff" opacity=".26"/><rect x="45.99" y="4.76" width="1.500" height="3" fill="#fff" opacity=".26"/><rect x="50.05" y="4.76" width="1.500" height="3" fill="#fff" opacity=".26"/><rect x="54.11" y="4.76" width="1.500" height="3" fill="#fff" opacity=".26"/><rect x="58.17" y="4.76" width="1.500" height="3" fill="#fff" opacity=".26"/><rect x="62.24" y="4.76" width="1.500" height="3" fill="#fff" opacity=".26"/><rect x="5.36" y="9.42" width="1.600" height="2.600" fill="#fff" opacity=".45"/><rect x="9.43" y="9.42" width="1.600" height="2.600" fill="#fff" opacity=".45"/><rect x="13.49" y="9.42" width="1.600" height="2.600" fill="#fff" opacity=".45"/><rect x="17.55" y="9.42" width="1.600" height="2.600" fill="#fff" opacity=".45"/><rect x="21.61" y="9.42" width="1.600" height="2.600" fill="#fff" opacity=".45"/><rect x="25.68" y="9.42" width="1.600" height="2.600" fill="#fff" opacity=".45"/><rect x="30.04" y="9.82" width="1" height="1" fill="#fff" opacity=".3"/><rect x="33.80" y="9.42" width="1.600" height="2.600" fill="#fff" opacity=".45"/><rect x="37.86" y="9.42" width="1.600" height="2.600" fill="#fff" opacity=".45"/><rect x="41.92" y="9.42" width="1.600" height="2.600" fill="#fff" opacity=".45"/><rect x="45.99" y="9.42" width="1.600" height="2.600" fill="#fff" opacity=".45"/><rect x="50.35" y="9.82" width="1" height="1" fill="#fff" opacity=".3"/><rect x="54.41" y="9.82" width="1" height="1" fill="#fff" opacity=".3"/><rect x="58.47" y="9.82" width="1" height="1" fill="#fff" opacity=".3"/><rect x="62.24" y="9.42" width="1.600" height="2.600" fill="#fff" opacity=".45"/><rect x="1.30" y="13.49" width="1.600" height="2.600" fill="#fff" opacity=".45"/><rect x="5.36" y="13.49" width="1.600" height="2.600" fill="#fff" opacity=".45"/><rect x="9.43" y="13.49" width="1.600" height="2.600" fill="#fff" opacity=".45"/><rect x="13.49" y="13.49" width="1.600" height="2.600" fill="#fff" opacity=".45"/><rect x="17.55" y="13.49" width="1.600" height="2.600" fill="#fff" opacity=".45"/><rect x="21.61" y="13.49" width="1.600" height="2.600" fill="#fff" opacity=".45"/><rect x="25.68" y="13.49" width="1.600" height="2.600" fill="#fff" opacity=".45"/><rect x="29.74" y="13.49" width="1.600" height="2.600" fill="#fff" opacity=".45"/><rect x="33.80" y="13.49" width="1.600" height="2.600" fill="#fff" opacity=".45"/><rect x="37.86" y="13.49" width="1.600" height="2.600" fill="#fff" opacity=".45"/><rect x="42.22" y="13.89" width="1" height="1" fill="#fff" opacity=".3"/><rect x="46.29" y="13.89" width="1" height="1" fill="#fff" opacity=".3"/><rect x="50.05" y="13.49" width="1.600" height="2.600" fill="#fff" opacity=".45"/><rect x="54.11" y="13.49" width="1.600" height="2.600" fill="#fff" opacity=".45"/><rect x="58.17" y="13.49" width="1.600" height="2.600" fill="#fff" opacity=".45"/><rect x="62.24" y="13.49" width="1.600" height="2.600" fill="#fff" opacity=".45"/><rect x="1.30" y="17.55" width="1.600" height="2.600" fill="#fff" opacity=".45"/><rect x="5.36" y="17.55" width="1.600" height="2.600" fill="#fff" opacity=".45"/><rect x="9.43" y="17.55" width="1.600" height="2.600" fill="#fff" opacity=".45"/><rect x="13.49" y="17.55" width="1.600" height="2.600" fill="#fff" opacity=".45"/><rect x="17.55" y="17.55" width="1.600" height="2.600" fill="#fff" opacity=".45"/><rect x="21.61" y="17.55" width="1.600" height="2.600" fill="#fff" opacity=".45"/><rect x="25.68" y="17.55" width="1.600" height="2.600" fill="#fff" opacity=".45"/><rect x="29.74" y="17.55" width="1.600" height="2.600" fill="#fff" opacity=".45"/><rect x="33.80" y="17.55" width="1.600" height="2.600" fill="#fff" opacity=".45"/><rect x="37.86" y="17.55" width="1.600" height="2.600" fill="#fff" opacity=".45"/><rect x="41.92" y="17.55" width="1.600" height="2.600" fill="#fff" opacity=".45"/><rect x="45.99" y="17.55" width="1.600" height="2.600" fill="#fff" opacity=".45"/><rect x="50.05" y="17.55" width="1.600" height="2.600" fill="#fff" opacity=".45"/><rect x="54.11" y="17.55" width="1.600" height="2.600" fill="#fff" opacity=".45"/><rect x="58.17" y="17.55" width="1.600" height="2.600" fill="#fff" opacity=".45"/><rect x="62.24" y="17.55" width="1.600" height="2.600" fill="#fff" opacity=".45"/><rect x="1.30" y="21.61" width="1.600" height="2.600" fill="#fff" opacity=".45"/><rect x="5.36" y="21.61" width="1.600" height="2.600" fill="#fff" opacity=".45"/><rect x="9.43" y="21.61" width="1.600" height="2.600" fill="#fff" opacity=".45"/><rect x="13.49" y="21.61" width="1.600" height="2.600" fill="#fff" opacity=".45"/><rect x="17.55" y="21.61" width="1.600" height="2.600" fill="#fff" opacity=".45"/><rect x="21.61" y="21.61" width="1.600" height="2.600" fill="#fff" opacity=".45"/><rect x="25.68" y="21.61" width="1.600" height="2.600" fill="#fff" opacity=".45"/><rect x="29.74" y="21.61" width="1.600" height="2.600" fill="#fff" opacity=".45"/><rect x="33.80" y="21.61" width="1.600" height="2.600" fill="#fff" opacity=".45"/><rect x="37.86" y="21.61" width="1.600" height="2.600" fill="#fff" opacity=".45"/><rect x="41.92" y="21.61" width="1.600" height="2.600" fill="#fff" opacity=".45"/><rect x="45.99" y="21.61" width="1.600" height="2.600" fill="#fff" opacity=".45"/><rect x="50.05" y="21.61" width="1.600" height="2.600" fill="#fff" opacity=".45"/><rect x="54.11" y="21.61" width="1.600" height="2.600" fill="#fff" opacity=".45"/><rect x="58.47" y="22.01" width="1" height="1" fill="#fff" opacity=".3"/><rect x="62.54" y="22.01" width="1" height="1" fill="#fff" opacity=".3"/><rect x="1.60" y="26.07" width="1" height="1" fill="#fff" opacity=".3"/><rect x="5.36" y="25.68" width="1.600" height="2.600" fill="#fff" opacity=".45"/><rect x="9.43" y="25.68" width="1.600" height="2.600" fill="#fff" opacity=".45"/><rect x="13.49" y="25.68" width="1.600" height="2.600" fill="#fff" opacity=".45"/><rect x="17.55" y="25.68" width="1.600" height="2.600" fill="#fff" opacity=".45"/><rect x="21.61" y="25.68" width="1.600" height="2.600" fill="#fff" opacity=".45"/><rect x="25.68" y="25.68" width="1.600" height="2.600" fill="#fff" opacity=".45"/><rect x="29.74" y="25.68" width="1.600" height="2.600" fill="#fff" opacity=".45"/><rect x="33.80" y="25.68" width="1.600" height="2.600" fill="#fff" opacity=".45"/><rect x="37.86" y="25.68" width="1.600" height="2.600" fill="#fff" opacity=".45"/><rect x="41.92" y="25.68" width="1.600" height="2.600" fill="#fff" opacity=".45"/><rect x="45.99" y="25.68" width="1.600" height="2.600" fill="#fff" opacity=".45"/><rect x="50.05" y="25.68" width="1.600" height="2.600" fill="#fff" opacity=".45"/><rect x="54.11" y="25.68" width="1.600" height="2.600" fill="#fff" opacity=".45"/><rect x="58.17" y="25.68" width="1.600" height="2.600" fill="#fff" opacity=".45"/><rect x="62.24" y="25.68" width="1.600" height="2.600" fill="#fff" opacity=".45"/><rect x="1.30" y="29.74" width="1.600" height="2.600" fill="#fff" opacity=".45"/><rect x="5.36" y="29.74" width="1.600" height="2.600" fill="#fff" opacity=".45"/><rect x="9.43" y="29.74" width="1.600" height="2.600" fill="#fff" opacity=".45"/><rect x="13.49" y="29.74" width="1.600" height="2.600" fill="#fff" opacity=".45"/><rect x="17.55" y="29.74" width="1.600" height="2.600" fill="#fff" opacity=".45"/><rect x="21.61" y="29.74" width="1.600" height="2.600" fill="#fff" opacity=".45"/><rect x="25.68" y="29.74" width="1.600" height="2.600" fill="#fff" opacity=".45"/><rect x="29.74" y="29.74" width="1.600" height="2.600" fill="#fff" opacity=".45"/><rect x="33.80" y="29.74" width="1.600" height="2.600" fill="#fff" opacity=".45"/><rect x="37.86" y="29.74" width="1.600" height="2.600" fill="#fff" opacity=".45"/><rect x="41.92" y="29.74" width="1.600" height="2.600" fill="#fff" opacity=".45"/><rect x="45.99" y="29.74" width="1.600" height="2.600" fill="#fff" opacity=".45"/><rect x="50.05" y="29.74" width="1.600" height="2.600" fill="#fff" opacity=".45"/><rect x="54.11" y="29.74" width="1.600" height="2.600" fill="#fff" opacity=".45"/><rect x="58.47" y="30.14" width="1" height="1" fill="#fff" opacity=".3"/><rect x="62.24" y="29.14" width="1.500" height="3" fill="#fff" opacity=".26"/><rect x="1.30" y="33.20" width="1.500" height="3" fill="#fff" opacity=".26"/><rect x="5.36" y="33.20" width="1.500" height="3" fill="#fff" opacity=".26"/><rect x="9.43" y="33.20" width="1.500" height="3" fill="#fff" opacity=".26"/><rect x="13.49" y="33.20" width="1.500" height="3" fill="#fff" opacity=".26"/><rect x="17.55" y="33.20" width="1.500" height="3" fill="#fff" opacity=".26"/><rect x="21.61" y="33.20" width="1.500" height="3" fill="#fff" opacity=".26"/><rect x="25.68" y="33.80" width="1.600" height="2.600" fill="#fff" opacity=".45"/><rect x="29.74" y="33.20" width="1.500" height="3" fill="#fff" opacity=".26"/><rect x="34.10" y="34.20" width="1" height="1" fill="#fff" opacity=".3"/><rect x="37.86" y="33.20" width="1.500" height="3" fill="#fff" opacity=".26"/><rect x="41.92" y="33.20" width="1.500" height="3" fill="#fff" opacity=".26"/><rect x="46.29" y="34.20" width="1" height="1" fill="#fff" opacity=".3"/><rect x="50.05" y="33.80" width="1.600" height="2.600" fill="#fff" opacity=".45"/><rect x="54.11" y="33.20" width="1.500" height="3" fill="#fff" opacity=".26"/><rect x="58.17" y="33.20" width="1.500" height="3" fill="#fff" opacity=".26"/><rect x="62.24" y="33.20" width="1.500" height="3" fill="#fff" opacity=".26"/><rect x="1.30" y="37.26" width="1.500" height="3" fill="#fff" opacity=".26"/><rect x="5.66" y="38.26" width="1" height="1" fill="#fff" opacity=".3"/><rect x="9.73" y="38.26" width="1" height="1" fill="#fff" opacity=".3"/><rect x="13.79" y="38.26" width="1" height="1" fill="#fff" opacity=".3"/><rect x="17.85" y="38.26" width="1" height="1" fill="#fff" opacity=".3"/><rect x="21.91" y="38.26" width="1" height="1" fill="#fff" opacity=".3"/><rect x="25.98" y="38.26" width="1" height="1" fill="#fff" opacity=".3"/><rect x="30.04" y="38.26" width="1" height="1" fill="#fff" opacity=".3"/><rect x="34.10" y="38.26" width="1" height="1" fill="#fff" opacity=".3"/><rect x="37.86" y="37.26" width="1.500" height="3" fill="#fff" opacity=".26"/><rect x="41.92" y="37.26" width="1.500" height="3" fill="#fff" opacity=".26"/><rect x="46.29" y="38.26" width="1" height="1" fill="#fff" opacity=".3"/><rect x="50.05" y="37.86" width="1.600" height="2.600" fill="#fff" opacity=".45"/><rect x="54.11" y="37.26" width="1.500" height="3" fill="#fff" opacity=".26"/><rect x="58.17" y="37.26" width="1.500" height="3" fill="#fff" opacity=".26"/><rect x="62.24" y="37.86" width="1.600" height="2.600" fill="#fff" opacity=".45"/><rect x="5.36" y="41.93" width="1.600" height="2.600" fill="#fff" opacity=".45"/><rect x="9.43" y="41.33" width="1.500" height="3" fill="#fff" opacity=".26"/><rect x="13.49" y="41.93" width="1.600" height="2.600" fill="#fff" opacity=".45"/><rect x="17.55" y="41.33" width="1.500" height="3" fill="#fff" opacity=".26"/><rect x="21.61" y="41.33" width="1.500" height="3" fill="#fff" opacity=".26"/><rect x="25.68" y="41.33" width="1.500" height="3" fill="#fff" opacity=".26"/><rect x="29.74" y="41.93" width="1.600" height="2.600" fill="#fff" opacity=".45"/><rect x="34.10" y="42.33" width="1" height="1" fill="#fff" opacity=".3"/><rect x="37.86" y="41.93" width="1.600" height="2.600" fill="#fff" opacity=".45"/><rect x="41.92" y="41.33" width="1.500" height="3" fill="#fff" opacity=".26"/><rect x="45.99" y="41.93" width="1.600" height="2.600" fill="#fff" opacity=".45"/><rect x="50.05" y="41.33" width="1.500" height="3" fill="#fff" opacity=".26"/><rect x="54.11" y="41.33" width="1.500" height="3" fill="#fff" opacity=".26"/><rect x="58.17" y="41.93" width="1.600" height="2.600" fill="#fff" opacity=".45"/><rect x="62.24" y="41.33" width="1.500" height="3" fill="#fff" opacity=".26"/><rect x="1.60" y="46.39" width="1" height="1" fill="#fff" opacity=".3"/><rect x="5.36" y="45.39" width="1.500" height="3" fill="#fff" opacity=".26"/><rect x="9.43" y="45.39" width="1.500" height="3" fill="#fff" opacity=".26"/><rect x="13.49" y="45.39" width="1.500" height="3" fill="#fff" opacity=".26"/><rect x="17.85" y="46.39" width="1" height="1" fill="#fff" opacity=".3"/><rect x="21.61" y="45.39" width="1.500" height="3" fill="#fff" opacity=".26"/><rect x="25.68" y="45.39" width="1.500" height="3" fill="#fff" opacity=".26"/><rect x="29.74" y="45.39" width="1.500" height="3" fill="#fff" opacity=".26"/><rect x="37.86" y="45.39" width="1.500" height="3" fill="#fff" opacity=".26"/><rect x="41.92" y="45.39" width="1.500" height="3" fill="#fff" opacity=".26"/><rect x="45.99" y="45.99" width="1.600" height="2.600" fill="#fff" opacity=".45"/><rect x="50.05" y="45.39" width="1.500" height="3" fill="#fff" opacity=".26"/><rect x="54.11" y="45.39" width="1.500" height="3" fill="#fff" opacity=".26"/><rect x="58.17" y="45.39" width="1.500" height="3" fill="#fff" opacity=".26"/><rect x="62.24" y="45.99" width="1.600" height="2.600" fill="#fff" opacity=".45"/><rect x="1.30" y="50.05" width="1.600" height="2.600" fill="#fff" opacity=".45"/><rect x="5.36" y="50.05" width="1.600" height="2.600" fill="#fff" opacity=".45"/><rect x="9.43" y="50.05" width="1.600" height="2.600" fill="#fff" opacity=".45"/><rect x="13.49" y="50.05" width="1.600" height="2.600" fill="#fff" opacity=".45"/><rect x="17.55" y="50.05" width="1.600" height="2.600" fill="#fff" opacity=".45"/><rect x="21.61" y="50.05" width="1.600" height="2.600" fill="#fff" opacity=".45"/><rect x="25.68" y="50.05" width="1.600" height="2.600" fill="#fff" opacity=".45"/><rect x="29.74" y="50.05" width="1.600" height="2.600" fill="#fff" opacity=".45"/><rect x="33.80" y="50.05" width="1.600" height="2.600" fill="#fff" opacity=".45"/><rect x="37.86" y="50.05" width="1.600" height="2.600" fill="#fff" opacity=".45"/><rect x="41.92" y="50.05" width="1.600" height="2.600" fill="#fff" opacity=".45"/><rect x="45.99" y="50.05" width="1.600" height="2.600" fill="#fff" opacity=".45"/><rect x="50.05" y="50.05" width="1.600" height="2.600" fill="#fff" opacity=".45"/><rect x="54.11" y="50.05" width="1.600" height="2.600" fill="#fff" opacity=".45"/><rect x="58.17" y="50.05" width="1.600" height="2.600" fill="#fff" opacity=".45"/><rect x="62.24" y="50.05" width="1.600" height="2.600" fill="#fff" opacity=".45"/><rect x="1.30" y="53.51" width="1.500" height="3" fill="#fff" opacity=".26"/><rect x="5.36" y="54.11" width="1.600" height="2.600" fill="#fff" opacity=".45"/><rect x="9.43" y="54.11" width="1.600" height="2.600" fill="#fff" opacity=".45"/><rect x="13.49" y="54.11" width="1.600" height="2.600" fill="#fff" opacity=".45"/><rect x="17.55" y="54.11" width="1.600" height="2.600" fill="#fff" opacity=".45"/><rect x="21.61" y="54.11" width="1.600" height="2.600" fill="#fff" opacity=".45"/><rect x="25.68" y="54.11" width="1.600" height="2.600" fill="#fff" opacity=".45"/><rect x="29.74" y="53.51" width="1.500" height="3" fill="#fff" opacity=".26"/><rect x="33.80" y="53.51" width="1.500" height="3" fill="#fff" opacity=".26"/><rect x="37.86" y="54.11" width="1.600" height="2.600" fill="#fff" opacity=".45"/><rect x="41.92" y="54.11" width="1.600" height="2.600" fill="#fff" opacity=".45"/><rect x="45.99" y="54.11" width="1.600" height="2.600" fill="#fff" opacity=".45"/><rect x="50.05" y="54.11" width="1.600" height="2.600" fill="#fff" opacity=".45"/><rect x="58.17" y="53.51" width="1.500" height="3" fill="#fff" opacity=".26"/><rect x="62.24" y="54.11" width="1.600" height="2.600" fill="#fff" opacity=".45"/><rect x="1.30" y="58.18" width="1.600" height="2.600" fill="#fff" opacity=".45"/><rect x="5.36" y="58.18" width="1.600" height="2.600" fill="#fff" opacity=".45"/><rect x="9.43" y="58.18" width="1.600" height="2.600" fill="#fff" opacity=".45"/><rect x="13.49" y="58.18" width="1.600" height="2.600" fill="#fff" opacity=".45"/><rect x="17.55" y="58.18" width="1.600" height="2.600" fill="#fff" opacity=".45"/><rect x="21.61" y="58.18" width="1.600" height="2.600" fill="#fff" opacity=".45"/><rect x="25.68" y="58.18" width="1.600" height="2.600" fill="#fff" opacity=".45"/><rect x="29.74" y="58.18" width="1.600" height="2.600" fill="#fff" opacity=".45"/><rect x="33.80" y="58.18" width="1.600" height="2.600" fill="#fff" opacity=".45"/><rect x="37.86" y="58.18" width="1.600" height="2.600" fill="#fff" opacity=".45"/><rect x="41.92" y="58.18" width="1.600" height="2.600" fill="#fff" opacity=".45"/><rect x="45.99" y="58.18" width="1.600" height="2.600" fill="#fff" opacity=".45"/><rect x="50.05" y="58.18" width="1.600" height="2.600" fill="#fff" opacity=".45"/><rect x="54.11" y="58.18" width="1.600" height="2.600" fill="#fff" opacity=".45"/><rect x="58.17" y="58.18" width="1.600" height="2.600" fill="#fff" opacity=".45"/><rect x="62.24" y="58.18" width="1.600" height="2.600" fill="#fff" opacity=".45"/><rect x="1.30" y="61.64" width="1.500" height="3" fill="#fff" opacity=".26"/><rect x="5.36" y="62.24" width="1.600" height="2.600" fill="#fff" opacity=".45"/><rect x="9.43" y="62.24" width="1.600" height="2.600" fill="#fff" opacity=".45"/><rect x="13.49" y="62.24" width="1.600" height="2.600" fill="#fff" opacity=".45"/><rect x="17.55" y="62.24" width="1.600" height="2.600" fill="#fff" opacity=".45"/><rect x="21.61" y="62.24" width="1.600" height="2.600" fill="#fff" opacity=".45"/><rect x="25.68" y="62.24" width="1.600" height="2.600" fill="#fff" opacity=".45"/><rect x="29.74" y="61.64" width="1.500" height="3" fill="#fff" opacity=".26"/><rect x="33.80" y="61.64" width="1.500" height="3" fill="#fff" opacity=".26"/><rect x="37.86" y="62.24" width="1.600" height="2.600" fill="#fff" opacity=".45"/><rect x="41.92" y="62.24" width="1.600" height="2.600" fill="#fff" opacity=".45"/><rect x="45.99" y="62.24" width="1.600" height="2.600" fill="#fff" opacity=".45"/><rect x="50.05" y="62.24" width="1.600" height="2.600" fill="#fff" opacity=".45"/><rect x="54.11" y="61.64" width="1.500" height="3" fill="#fff" opacity=".26"/><rect x="58.17" y="61.64" width="1.500" height="3" fill="#fff" opacity=".26"/><rect x="62.24" y="62.24" width="1.600" height="2.600" fill="#fff" opacity=".45"/><path d="M3.500 2.500l1 2.300 2.300-1.200-.8 2.400 2.500.6-2.300 1.200 1.300 2.200-2.500-.5-.4 2.500-1.500-2-1.900 1.700.3-2.500-2.500-.2 2-1.600-1.600-1.900 2.500.2z" fill="#ffb21a" stroke="#f08a10" stroke-width=".4"/></svg>
<div class="a panel" style="left:849px;top:105px;width:165px;height:175px;background:linear-gradient(#bacbde 0px,#cbd9e9 11px,#d8e5f1 18px,#dbe6f3 100%);box-shadow:inset 0 0 0 1px rgba(255,255,255,.42)"></div><span class="t" style="left:856.80px;top:112.62px;font-size:11.5px;line-height:14px;color:#48566b;transform:scaleX(0.9391);">History</span><div class="a cb" style="left:993px;top:114px;width:12px;height:12px"></div><svg style="left:995.5px;top:116.5px" width="7" height="7" viewBox="0 0 7 7"><path d="M1 1l5 5M6 1l-5 5" stroke="#3d4656" stroke-width="2.900"/><path d="M1.200 1.200l4.600 4.600M5.800 1.200l-4.600 4.600" stroke="#ffffff" stroke-width="1.500"/></svg>
<div class="a" style="left:856px;top:128px;width:151px;height:124px;background:#f0f0f0"></div>
<div class="a" style="left:856px;top:128px;width:151px;height:66px;background:#fff"></div>
<div class="a" style="left:856px;top:252px;width:151px;height:20px;background:linear-gradient(#fcfcfc,#f2f2f2)"></div>
<div class="a" style="left:856.500px;top:177.500px;width:150px;height:16px;box-sizing:border-box;border:1px solid #56a4f3;border-radius:2.500px;background:linear-gradient(#eaf4ff,#c3defb)"></div>
<span class="t" style="left:875.20px;top:129.39px;font-size:11px;line-height:14px;color:#000;transform:scaleX(0.8688);">Open Image</span>
<span class="t" style="left:875.20px;top:145.79px;font-size:11px;line-height:14px;color:#000;transform:scaleX(0.8748);">New Layer</span>
<span class="t" style="left:875.20px;top:162.19px;font-size:11px;line-height:14px;color:#000;transform:scaleX(0.8877);">Move Layer Down</span>
<span class="t" style="left:875.20px;top:178.59px;font-size:11px;line-height:14px;color:#000;transform:scaleX(0.8776);">Paint Bucket</span>
<svg style="left:857px;top:129px" width="15" height="14" viewBox="0 0 15 14"><path d="M.8 1.500l5-1v13.300l-5-1.300z" fill="url(#gFold)" stroke="#c08a25" stroke-width=".8"/><path d="M5.800 .5v13.300l3.400-1.300v-10.500z" fill="#f3cd74" stroke="#c08a25" stroke-width=".7"/><path d="M7 6.500h3.500V4.500l3.800 3.300-3.800 3.300V9H7z" fill="#3d9bf0" stroke="#1b6fc4" stroke-width=".6"/></svg>
<svg style="left:858px;top:146px" width="15" height="14" viewBox="0 0 15 14"><rect x=".5" y=".5" width="11.500" height="11" rx="1.200" fill="url(#gLay)" stroke="#93b1da"/><path d="M7.600 10.200h6.400M10.800 7v6.400" stroke="#158a1c" stroke-width="3"/><path d="M8.200 10.200h5.200M10.800 7.600v5.200" stroke="#3fd045" stroke-width="1.700"/></svg>
<svg style="left:858px;top:162.5px" width="14" height="14" viewBox="0 0 14 14"><path d="M4.500 .5h4.500v6h4L6.750 13.300 .5 6.500h4z" fill="url(#gBlueA)" stroke="#2a86e0" stroke-width=".6" stroke-linejoin="round"/></svg>
<svg style="left:856.5px;top:178px" width="14" height="15" viewBox="0 0 14 16"><path d="M5 4.800C2 6 .6 9 1.400 12.800c.8.700 1.700.200 1.600-1C2.900 9.500 3.800 8 6 6.800z" fill="#2a62de"/><path d="M3.600 6.900L9.200 1.900 15 8.300q.4.800-.3 1.400L10.300 14.400q-.9.600-1.700-.1z" fill="url(#gBucket)" stroke="#6a6f78" stroke-width=".7" stroke-linejoin="round"/><path d="M3.900 6.900L9.200 2.200l1.300 1.500L5.200 8.500z" fill="#eef0f4" stroke="#9a9fa8" stroke-width=".4"/><path d="M7.200 5V.6" stroke="#8a8f98" stroke-width=".8"/></svg>
<svg style="left:860px;top:255.2px" width="12" height="11" viewBox="0 0 12 11"><rect x=".3" y=".5" width="2" height="10" fill="#2f86e0"/><path d="M7 .5v10L2.300 5.500zM11.700 .5v10L7 5.500z" fill="#4a9cf0" stroke="#2a78d0" stroke-width=".4"/></svg>
<svg style="left:879.5px;top:254.7px" width="15" height="12" viewBox="0 0 15.500 13.500"><path d="M0.500 6.500L7 1v3.300c5 .2 7.500 3 7.800 8.200-1.800-2.800-4-3.800-7.800-3.700V12z" fill="url(#gBlueA)" stroke="#2a78d0" stroke-width=".7" stroke-linejoin="round"/></svg>
<svg style="left:901.5px;top:254.7px" width="15" height="12" viewBox="0 0 15.500 13.500"><path d="M14.500 6.500L8 1v3.300c-5 .2-7.500 3-7.800 8.200 1.800-2.800 4-3.800 7.800-3.700V12z" fill="url(#gGrayA)" stroke="#b3b6bb" stroke-width=".7" stroke-linejoin="round"/></svg>
<svg style="left:922.5px;top:255.2px" width="12" height="11" viewBox="0 0 12 11"><rect x="9.700" y=".5" width="2" height="10" fill="#b9bcc1"/><path d="M5 .5v10l4.700-5zM.3 .5v10l4.700-5z" fill="#c6c9cd" stroke="#b0b3b8" stroke-width=".4"/></svg>
<div class="a panel" style="left:849px;top:512px;width:165px;height:174px;background:linear-gradient(#bacbde 0px,#cbd9e9 11px,#d8e5f1 18px,#dbe6f3 100%);box-shadow:inset 0 0 0 1px rgba(255,255,255,.42)"></div><span class="t" style="left:856.80px;top:519.32px;font-size:11.5px;line-height:14px;color:#48566b;transform:scaleX(0.8547);">Layers</span><div class="a cb" style="left:993px;top:520.5px;width:12px;height:12px"></div><svg style="left:995.5px;top:523.0px" width="7" height="7" viewBox="0 0 7 7"><path d="M1 1l5 5M6 1l-5 5" stroke="#3d4656" stroke-width="2.900"/><path d="M1.200 1.200l4.600 4.600M5.800 1.200l-4.600 4.600" stroke="#ffffff" stroke-width="1.500"/></svg>
<div class="a" style="left:856px;top:535px;width:151px;height:123px;background:#f0f0f0"></div>
<div class="a" style="left:856px;top:535px;width:151px;height:44px;background:#fff"></div>
<div class="a" style="left:856px;top:658px;width:151px;height:21px;background:linear-gradient(#fcfcfc,#f2f2f2)"></div>
<div class="a" style="left:856.500px;top:578.500px;width:150px;height:44px;box-sizing:border-box;border:1px solid #56a4f3;border-radius:3px;background:linear-gradient(#e6f2ff,#cfe5fc 50%,#bcdafa)"></div>
<svg style="left:860px;top:536px" width="40" height="40" viewBox="0 0 40 40"><rect x=".5" y=".5" width="39" height="39" rx="2" fill="url(#chk)" stroke="#c4c4c4"/></svg>
<div class="a" style="left:861px;top:581.500px;width:38px;height:37px;background:#fb0414;box-shadow:0 0 1.500px .5px rgba(70,70,70,.6)"></div>
<span class="t" style="left:906.50px;top:549.79px;font-size:11px;line-height:14px;color:#000;transform:scaleX(0.9198);font-style:italic;">Background</span>
<span class="t" style="left:906.50px;top:593.69px;font-size:11px;line-height:14px;color:#000;transform:scaleX(0.8721);">Layer 2</span>
<svg style="left:992px;top:550.5px" width="12" height="12" viewBox="0 0 12 12"><rect x=".5" y=".5" width="11" height="11" fill="#f4f6f8" stroke="#8e8f8f"/><rect x="2" y="2" width="8" height="8" fill="none" stroke="#dfe3e8" stroke-width="1"/><path d="M3 6l2 2.500 4-5.500" fill="none" stroke="#2a3f8c" stroke-width="1.600"/></svg>
<svg style="left:992px;top:594.5px" width="12" height="12" viewBox="0 0 12 12"><rect x=".5" y=".5" width="11" height="11" fill="#f4f6f8" stroke="#8e8f8f"/><rect x="2" y="2" width="8" height="8" fill="none" stroke="#dfe3e8" stroke-width="1"/><path d="M3 6l2 2.500 4-5.500" fill="none" stroke="#2a3f8c" stroke-width="1.600"/></svg>
<svg style="left:860px;top:661px" width="15" height="14" viewBox="0 0 15 14"><rect x=".5" y=".5" width="11.500" height="11" rx="1.200" fill="url(#gLay)" stroke="#93b1da"/><path d="M7.600 10.200h6.400M10.800 7v6.400" stroke="#158a1c" stroke-width="3"/><path d="M8.200 10.200h5.200M10.800 7.600v5.200" stroke="#3fd045" stroke-width="1.700"/></svg>
<svg style="left:881px;top:662px" width="13" height="12" viewBox="0 0 13 12"><path d="M2 2l9 8.500M11 2l-9 8.500" stroke="#a8151c" stroke-width="3.600" stroke-linecap="round"/><path d="M2 2l9 8.500M11 2l-9 8.500" stroke="#d42a30" stroke-width="2.200" stroke-linecap="round"/></svg>
<svg style="left:900.5px;top:661px" width="16" height="14" viewBox="0 0 16 14"><rect x=".5" y=".5" width="11.500" height="10.500" rx="1.200" fill="#dbe8f7" stroke="#9dbae0"/><rect x="3" y="2.800" width="11.500" height="10.500" rx="1.200" fill="url(#gLay)" stroke="#93b1da"/></svg>
<svg style="left:922px;top:661px" width="14" height="14" viewBox="0 0 14 14"><rect x=".5" y=".5" width="12.500" height="6" fill="#e2e3e5" stroke="#cfd1d4"/><rect x=".5" y="8" width="12.500" height="5.500" fill="#e2e3e5" stroke="#cfd1d4"/><path d="M5.500 2h2.500v4h2.500L6.750 10 3 6h2.500z" fill="#b3b6ba"/></svg>
<svg style="left:943.5px;top:661px" width="14" height="14" viewBox="0 0 14 14"><path d="M4.200 13.500h4.600v-6.500h4L6.500 .5 .2 7h4z" fill="url(#gBlueA)" stroke="#2a86e0" stroke-width=".6" stroke-linejoin="round"/></svg>
<svg style="left:964px;top:661px" width="14" height="14" viewBox="0 0 14 14"><path d="M4.200 .5h4.600v6.500h4L6.500 13.500 .2 7h4z" fill="url(#gGrayA)" stroke="#b3b6bb" stroke-width=".6" stroke-linejoin="round"/></svg>
<svg style="left:984.5px;top:660px" width="16" height="16" viewBox="0 0 16 16"><path d="M9.500 1.500l5 3-7 10.500-5-3z" fill="#eaf3f4" stroke="#a9bfc6" stroke-width=".8"/><circle cx="11.500" cy="4.300" r="1" fill="none" stroke="#a9bfc6" stroke-width=".6"/><path d="M1 1.500l2-1.300 6 6.300-1.700 1.400z" fill="#f0c53a" stroke="#a8861c" stroke-width=".5"/><path d="M.5 .8l1.800-.6.7 1.200-1.800 1z" fill="#e86a6a"/><path d="M7.300 7.900l1.700-1.400.9 2.300z" fill="#2a2a2a"/></svg>
<div class="a" style="left:7px;top:690px;width:1010px;height:19px;background:linear-gradient(#f7fafd,#e9f0f9 45%,#dbe6f3)"></div>
<svg style="left:9px;top:691.5px" width="14" height="14" viewBox="0 0 14 14"><circle cx="7" cy="7" r="6.600" fill="#dfe6f0" stroke="#9aa6b8" stroke-width=".6"/><circle cx="7" cy="7" r="5.300" fill="url(#gHelp)"/><text x="7" y="10.300" font-family="Liberation Sans, sans-serif" font-weight="bold" font-size="9" text-anchor="middle" fill="#fff">?</text></svg>
<span class="t" style="left:26.00px;top:692.22px;font-size:11.5px;line-height:14px;color:#080b10;transform:scaleX(0.9636);">Paint Bucket: Left click to fill a region with the primary color, right click to fill with the secondary color</span>
<svg style="left:760px;top:692px" width="16" height="15" viewBox="0 0 16 15"><path d="M6 1v4M15 1v4M6 3h9M12.500 1.500l2 1.500-2 1.500M1 7h5M1 14.500h5M3.500 7v7.500M2 12.500l1.500 2 1.500-2" fill="none" stroke="#3f92e8" stroke-width="1"/><path d="M7.500 7.500h4.500l2.500 2.500v4.500h-7z" fill="#f6f8fa" stroke="#8a939c" stroke-width=".8"/></svg>
<span class="t" style="left:778.50px;top:692.12px;font-size:11.5px;line-height:14px;color:#080b10;transform:scaleX(0.8451);">1024 x 1024</span>
<svg style="left:886px;top:692px" width="13" height="15" viewBox="0 0 13 15"><path d="M3.500 0v14M0 3.500h13" stroke="#3f92e8" stroke-width="1" stroke-dasharray="1 1"/><path d="M5.500 6h4l2.500 2.500v5.500h-6.500z" fill="#f6f8fa" stroke="#8a939c" stroke-width=".8"/></svg>
<span class="t" style="left:902.00px;top:692.12px;font-size:11.5px;line-height:14px;color:#080b10;transform:scaleX(0.8601);">636, 138</span>
<svg style="left:1005px;top:697.7px" width="11" height="11" viewBox="0 0 11 11"><g fill="#fff"><rect x="8" y="1" width="2" height="2"/><rect x="4.500" y="4.600" width="2" height="2"/><rect x="8" y="4.600" width="2" height="2"/><rect x="1" y="8.200" width="2" height="2"/><rect x="4.500" y="8.200" width="2" height="2"/><rect x="8" y="8.200" width="2" height="2"/></g><g fill="#8f98a6"><rect x="7" y="0" width="2" height="2"/><rect x="3.500" y="3.600" width="2" height="2"/><rect x="7" y="3.600" width="2" height="2"/><rect x="0" y="7.200" width="2" height="2"/><rect x="3.500" y="7.200" width="2" height="2"/><rect x="7" y="7.200" width="2" height="2"/></g></svg>
</body></html>
